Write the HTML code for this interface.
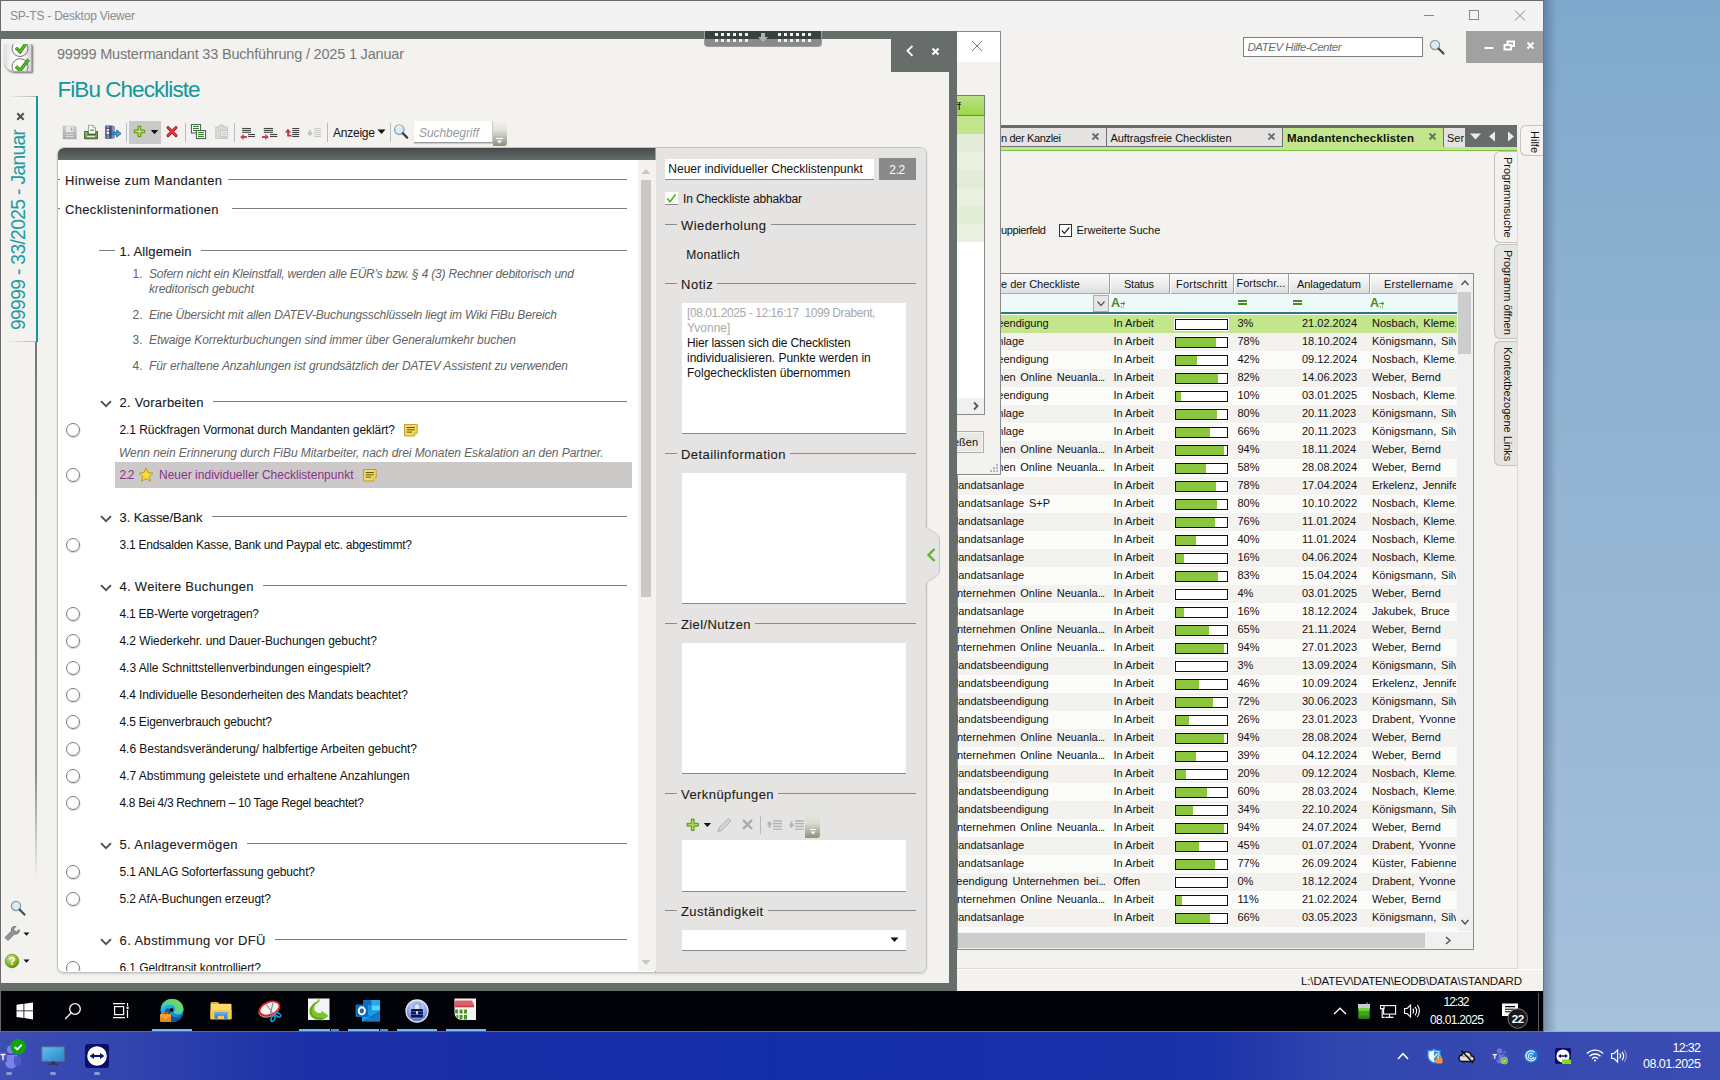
<!DOCTYPE html><html lang="de"><head><meta charset="utf-8"><title>SP-TS - Desktop Viewer</title>
<style>
html,body{margin:0;padding:0;}
body{width:1720px;height:1080px;overflow:hidden;position:relative;background:#8fb0cf;font-family:"Liberation Sans",sans-serif;font-size:12px;}
div,span.t,svg{position:absolute;box-sizing:border-box;}
span.t{white-space:pre;display:block;}
.clip{overflow:hidden;}
</style></head><body><div style="left:1543px;top:0px;width:177px;height:1031px;background:linear-gradient(180deg,#7fa9cc 0%,#8db1d0 30%,#9ab8d6 70%,#a5c1dc 100%);"></div><div style="left:1543px;top:0px;width:14px;height:1031px;background:linear-gradient(90deg,rgba(60,80,110,.45),rgba(60,80,110,0));"></div><div style="left:0px;top:0px;width:1544px;height:1032px;background:#f3f3f3;border-top:1px solid #6a6a6a;border-left:1px solid #6a6a6a;border-right:1px solid #70757a;"></div><span class="t" style="left:10px;top:9.04px;font-size:12px;line-height:15px;color:#8b8b8b;letter-spacing:-0.230px;">SP-TS - Desktop Viewer</span><svg style="left:1415px;top:1px" width="128" height="30" viewBox="0 0 128 30"><g stroke="#8a8a8a" stroke-width="1" fill="none"><path d="M9 14.5h10"/><rect x="54.5" y="9.5" width="9" height="9"/><path d="M100 9.5l10 10M110 9.5l-10 10"/></g></svg><div style="left:1px;top:31px;width:1542px;height:960px;background:#f3f2ee;"></div><div style="left:1243px;top:37px;width:180px;height:20px;background:#fff;border:1px solid #7f7f7f;"></div><span class="t" style="left:1247.5px;top:40.02px;font-size:11.5px;line-height:14px;color:#6d6d6d;letter-spacing:-0.473px;font-style:italic;">DATEV Hilfe-Center</span><svg style="left:1428px;top:38px" width="18" height="18" viewBox="0 0 18 18"><circle cx="7" cy="7" r="4.6" fill="#d8ecf7" stroke="#8a9aa6" stroke-width="1.3"/><path d="M10.5 10.5l5 5" stroke="#4a4a4a" stroke-width="2.2" stroke-linecap="round"/></svg><div style="left:1466px;top:31px;width:77px;height:32px;background:#a0a1a0;"></div><svg style="left:1466px;top:31px" width="77" height="32" viewBox="0 0 77 32"><g fill="none" stroke="#fff" stroke-width="2"><path d="M18.5 17h9"/><path d="M38.5 14h6.5v4.5h-6.5z"/><path d="M41.5 13v-2.5h6.5v4.5h-2.5"/><path d="M61.5 11.5l6 6M67.5 11.5l-6 6"/></g></svg><div style="left:1000px;top:125px;width:517px;height:3px;background:#676d6b;"></div><div style="left:1464px;top:125px;width:53px;height:22px;background:#676d6b;"></div><div style="left:1000px;top:128px;width:107px;height:19px;background:#e4e3e1;border-right:1px solid #707070;border-bottom:1px solid #707070;"></div><div style="left:1107px;top:128px;width:176px;height:19px;background:#e4e3e1;border-right:1px solid #707070;border-bottom:1px solid #707070;"></div><div style="left:1283px;top:128px;width:161px;height:19px;background:#c3e68d;"></div><div style="left:1443px;top:128px;width:22px;height:19px;background:#e4e3e1;border-left:1px solid #707070;"></div><div style="left:1000px;top:147px;width:517px;height:4px;background:#c3e68d;border-bottom:1px solid #7cc142;"></div><span class="t" style="left:1001px;top:130.79px;font-size:11px;line-height:14px;color:#111;letter-spacing:-0.352px;">n der Kanzlei</span><span class="t" style="left:1110.5px;top:130.79px;font-size:11px;line-height:14px;color:#111;letter-spacing:-0.053px;">Auftragsfreie Checklisten</span><span class="t" style="left:1287px;top:130.52px;font-size:11.5px;line-height:14px;color:#111;letter-spacing:0.192px;font-weight:bold;">Mandantenchecklisten</span><span class="t" style="left:1447px;top:130.79px;font-size:11px;line-height:14px;color:#111;">Ser</span><svg style="left:1085px;top:128px" width="360" height="19" viewBox="0 0 360 19"><g transform="translate(10.5,8.5)"><path d="M-3 -3l6 6M3 -3l-6 6" stroke="#6b6b6b" stroke-width="1.8" fill="none"/></g><g transform="translate(186.5,8.5)"><path d="M-3 -3l6 6M3 -3l-6 6" stroke="#6b6b6b" stroke-width="1.8" fill="none"/></g><g transform="translate(347.5,8.5)"><path d="M-3 -3l6 6M3 -3l-6 6" stroke="#6b6b6b" stroke-width="1.8" fill="none"/></g></svg><svg style="left:1464px;top:128px" width="53" height="19" viewBox="0 0 53 19" fill="#ececec"><path d="M6 5.5h11l-5.5 6z"/><path d="M31 3.5v10l-6-5z"/><path d="M44 3.5v10l6-5z"/></svg><div style="left:1517px;top:151px;width:1px;height:818px;background:#dad9d6;"></div><div style="left:1520px;top:125px;width:23px;height:31px;background:#f5f4f1;border:1px solid #c4c3c0;border-right:none;border-radius:6px 0 0 6px;"></div><span class="t" style="left:1527.5px;top:131px;writing-mode:vertical-rl;font-size:11px;color:#111;white-space:pre;line-height:13px;">Hilfe</span><div style="left:1494px;top:151px;width:23px;height:92px;background:#f3f2ee;border:1px solid #c4c3c0;border-right:none;border-radius:6px 0 0 6px;"></div><div style="left:1494px;top:244px;width:23px;height:95px;background:#e6e5e2;border:1px solid #c4c3c0;border-right:none;border-radius:6px 0 0 6px;"></div><div style="left:1494px;top:341px;width:23px;height:125px;background:#e6e5e2;border:1px solid #c4c3c0;border-right:none;border-radius:6px 0 0 6px;"></div><span class="t" style="left:1501px;top:157px;writing-mode:vertical-rl;font-size:11px;color:#111;white-space:pre;line-height:13px;">Programmsuche</span><span class="t" style="left:1501px;top:250px;writing-mode:vertical-rl;font-size:11px;color:#111;white-space:pre;line-height:13px;">Programm öffnen</span><span class="t" style="left:1501px;top:347px;writing-mode:vertical-rl;font-size:11px;color:#111;white-space:pre;line-height:13px;">Kontextbezogene Links</span><span class="t" style="left:1001px;top:223.19px;font-size:11px;line-height:14px;color:#111;letter-spacing:-0.370px;">uppierfeld</span><div style="left:1059px;top:224px;width:13px;height:13px;background:#fff;border:1px solid #333;"></div><svg style="left:1059px;top:224px" width="13" height="13" viewBox="0 0 13 13"><path d="M2.8 6.5l2.6 2.8l4.8-5.8" fill="none" stroke="#222" stroke-width="1.2"/></svg><span class="t" style="left:1076.5px;top:223.19px;font-size:11px;line-height:14px;color:#111;">Erweiterte Suche</span><div style="left:957px;top:273px;width:517px;height:677px;background:#fbfbfa;border:1px solid #8c8c8c;"></div><div style="left:958px;top:274px;width:499px;height:20px;background:linear-gradient(180deg,#fbfbfb 0%,#f0f0f0 45%,#dedede 100%);border-bottom:1px solid #a9a9a9;"></div><div style="left:1109px;top:274px;width:2px;height:20px;background:#a0a0a0;border-right:1px solid #fff;"></div><div style="left:1169px;top:274px;width:2px;height:20px;background:#a0a0a0;border-right:1px solid #fff;"></div><div style="left:1233px;top:274px;width:2px;height:20px;background:#a0a0a0;border-right:1px solid #fff;"></div><div style="left:1288px;top:274px;width:2px;height:20px;background:#a0a0a0;border-right:1px solid #fff;"></div><div style="left:1369px;top:274px;width:2px;height:20px;background:#a0a0a0;border-right:1px solid #fff;"></div><span class="t" style="left:1001px;top:277.19px;font-size:11px;line-height:14px;color:#111;">e der Checkliste</span><span class="t" style="left:1124px;top:277.19px;font-size:11px;line-height:14px;color:#111;letter-spacing:-0.237px;">Status</span><span class="t" style="left:1176px;top:277.19px;font-size:11px;line-height:14px;color:#111;letter-spacing:0.209px;">Fortschritt</span><span class="t" style="left:1236.5px;top:276.19px;font-size:11px;line-height:14px;color:#111;">Fortschr...</span><span class="t" style="left:1297px;top:277.19px;font-size:11px;line-height:14px;color:#111;letter-spacing:-0.083px;">Anlagedatum</span><span class="t" style="left:1384px;top:277.19px;font-size:11px;line-height:14px;color:#111;letter-spacing:0.095px;">Erstellername</span><div style="left:958px;top:294px;width:499px;height:20px;background:#eef9f9;border-bottom:2px solid #2d7c7c;"></div><div style="left:1093px;top:295px;width:16px;height:17px;background:#e6e6e6;border:1px solid #adadad;"></div><svg style="left:1093px;top:295px" width="16" height="17" viewBox="0 0 16 17"><path d="M4.5 6.5l3.5 4l3.5-4" fill="none" stroke="#555" stroke-width="1.2"/></svg><svg style="left:1111px;top:298px" width="16" height="11" viewBox="0 0 16 11"><text x="0" y="9" font-family="Liberation Sans,sans-serif" font-weight="bold" font-size="12.5" fill="#4b8b1a">A</text><path d="M9.5 5.5h4M12 3.8l1.8 1.7l-1.8 1.7" stroke="#4b8b1a" stroke-width="1" fill="none"/><path d="M10 9h4" stroke="#4b8b1a" stroke-width="1" stroke-dasharray="1 1"/></svg><svg style="left:1370px;top:298px" width="16" height="11" viewBox="0 0 16 11"><text x="0" y="9" font-family="Liberation Sans,sans-serif" font-weight="bold" font-size="12.5" fill="#4b8b1a">A</text><path d="M9.5 5.5h4M12 3.8l1.8 1.7l-1.8 1.7" stroke="#4b8b1a" stroke-width="1" fill="none"/><path d="M10 9h4" stroke="#4b8b1a" stroke-width="1" stroke-dasharray="1 1"/></svg><svg style="left:1238px;top:300px" width="10" height="6" viewBox="0 0 10 6"><path d="M0 1h9M0 4h9" stroke="#4b8b1a" stroke-width="1.8"/></svg><svg style="left:1293px;top:300px" width="10" height="6" viewBox="0 0 10 6"><path d="M0 1h9M0 4h9" stroke="#4b8b1a" stroke-width="1.8"/></svg><div style="left:958px;top:315px;width:499px;height:18px;background:#c3e68d;"></div><span class="t" style="left:949px;top:316.19px;font-size:11px;line-height:14px;color:#111;word-spacing:1.6px;">Mandatsbeendigung</span><span class="t" style="left:1113.5px;top:316.19px;font-size:11px;line-height:14px;color:#111;">In Arbeit</span><div style="left:1175px;top:319px;width:53px;height:11px;background:#fff;border:1px solid #111;box-shadow:0 0 0 1px #fff;"></div><span class="t" style="left:1237.5px;top:316.19px;font-size:11px;line-height:14px;color:#111;">3%</span><span class="t" style="left:1302px;top:316.19px;font-size:11px;line-height:14px;color:#111;">21.02.2024</span><div class="clip" style="left:1370px;top:315px;width:86px;height:18px;"><span class="t" style="left:2px;top:1.19px;font-size:11px;line-height:14px;color:#111;word-spacing:1.8px;">Nosbach, Kleme...</span></div><div style="left:958px;top:333px;width:499px;height:18px;background:#f3f2ef;"></div><span class="t" style="left:949px;top:334.19px;font-size:11px;line-height:14px;color:#111;word-spacing:1.6px;">Mandatsanlage</span><span class="t" style="left:1113.5px;top:334.19px;font-size:11px;line-height:14px;color:#111;">In Arbeit</span><div style="left:1175px;top:337px;width:53px;height:11px;background:#fff;border:1px solid #111;box-shadow:0 0 0 1px #fff;"></div><div style="left:1176px;top:338px;width:40px;height:9px;background:#8cc63f;"></div><span class="t" style="left:1237.5px;top:334.19px;font-size:11px;line-height:14px;color:#111;">78%</span><span class="t" style="left:1302px;top:334.19px;font-size:11px;line-height:14px;color:#111;">18.10.2024</span><div class="clip" style="left:1370px;top:333px;width:86px;height:18px;"><span class="t" style="left:2px;top:1.19px;font-size:11px;line-height:14px;color:#111;word-spacing:1.8px;">Königsmann, Silv...</span></div><div style="left:958px;top:351px;width:499px;height:18px;background:#fbfbfa;"></div><span class="t" style="left:949px;top:352.19px;font-size:11px;line-height:14px;color:#111;word-spacing:1.6px;">Mandatsbeendigung</span><span class="t" style="left:1113.5px;top:352.19px;font-size:11px;line-height:14px;color:#111;">In Arbeit</span><div style="left:1175px;top:355px;width:53px;height:11px;background:#fff;border:1px solid #111;box-shadow:0 0 0 1px #fff;"></div><div style="left:1176px;top:356px;width:21px;height:9px;background:#8cc63f;"></div><span class="t" style="left:1237.5px;top:352.19px;font-size:11px;line-height:14px;color:#111;">42%</span><span class="t" style="left:1302px;top:352.19px;font-size:11px;line-height:14px;color:#111;">09.12.2024</span><div class="clip" style="left:1370px;top:351px;width:86px;height:18px;"><span class="t" style="left:2px;top:1.19px;font-size:11px;line-height:14px;color:#111;word-spacing:1.8px;">Nosbach, Kleme...</span></div><div style="left:958px;top:369px;width:499px;height:18px;background:#f3f2ef;"></div><span class="t" style="left:949px;top:370.19px;font-size:11px;line-height:14px;color:#111;word-spacing:1.6px;">Unternehmen Online Neuanla<span style="letter-spacing:-0.9px">...</span></span><span class="t" style="left:1113.5px;top:370.19px;font-size:11px;line-height:14px;color:#111;">In Arbeit</span><div style="left:1175px;top:373px;width:53px;height:11px;background:#fff;border:1px solid #111;box-shadow:0 0 0 1px #fff;"></div><div style="left:1176px;top:374px;width:42px;height:9px;background:#8cc63f;"></div><span class="t" style="left:1237.5px;top:370.19px;font-size:11px;line-height:14px;color:#111;">82%</span><span class="t" style="left:1302px;top:370.19px;font-size:11px;line-height:14px;color:#111;">14.06.2023</span><div class="clip" style="left:1370px;top:369px;width:86px;height:18px;"><span class="t" style="left:2px;top:1.19px;font-size:11px;line-height:14px;color:#111;word-spacing:1.8px;">Weber, Bernd</span></div><div style="left:958px;top:387px;width:499px;height:18px;background:#fbfbfa;"></div><span class="t" style="left:949px;top:388.19px;font-size:11px;line-height:14px;color:#111;word-spacing:1.6px;">Mandatsbeendigung</span><span class="t" style="left:1113.5px;top:388.19px;font-size:11px;line-height:14px;color:#111;">In Arbeit</span><div style="left:1175px;top:391px;width:53px;height:11px;background:#fff;border:1px solid #111;box-shadow:0 0 0 1px #fff;"></div><div style="left:1176px;top:392px;width:5px;height:9px;background:#8cc63f;"></div><span class="t" style="left:1237.5px;top:388.19px;font-size:11px;line-height:14px;color:#111;">10%</span><span class="t" style="left:1302px;top:388.19px;font-size:11px;line-height:14px;color:#111;">03.01.2025</span><div class="clip" style="left:1370px;top:387px;width:86px;height:18px;"><span class="t" style="left:2px;top:1.19px;font-size:11px;line-height:14px;color:#111;word-spacing:1.8px;">Nosbach, Kleme...</span></div><div style="left:958px;top:405px;width:499px;height:18px;background:#f3f2ef;"></div><span class="t" style="left:949px;top:406.19px;font-size:11px;line-height:14px;color:#111;word-spacing:1.6px;">Mandatsanlage</span><span class="t" style="left:1113.5px;top:406.19px;font-size:11px;line-height:14px;color:#111;">In Arbeit</span><div style="left:1175px;top:409px;width:53px;height:11px;background:#fff;border:1px solid #111;box-shadow:0 0 0 1px #fff;"></div><div style="left:1176px;top:410px;width:41px;height:9px;background:#8cc63f;"></div><span class="t" style="left:1237.5px;top:406.19px;font-size:11px;line-height:14px;color:#111;">80%</span><span class="t" style="left:1302px;top:406.19px;font-size:11px;line-height:14px;color:#111;">20.11.2023</span><div class="clip" style="left:1370px;top:405px;width:86px;height:18px;"><span class="t" style="left:2px;top:1.19px;font-size:11px;line-height:14px;color:#111;word-spacing:1.8px;">Königsmann, Silv...</span></div><div style="left:958px;top:423px;width:499px;height:18px;background:#fbfbfa;"></div><span class="t" style="left:949px;top:424.19px;font-size:11px;line-height:14px;color:#111;word-spacing:1.6px;">Mandatsanlage</span><span class="t" style="left:1113.5px;top:424.19px;font-size:11px;line-height:14px;color:#111;">In Arbeit</span><div style="left:1175px;top:427px;width:53px;height:11px;background:#fff;border:1px solid #111;box-shadow:0 0 0 1px #fff;"></div><div style="left:1176px;top:428px;width:34px;height:9px;background:#8cc63f;"></div><span class="t" style="left:1237.5px;top:424.19px;font-size:11px;line-height:14px;color:#111;">66%</span><span class="t" style="left:1302px;top:424.19px;font-size:11px;line-height:14px;color:#111;">20.11.2023</span><div class="clip" style="left:1370px;top:423px;width:86px;height:18px;"><span class="t" style="left:2px;top:1.19px;font-size:11px;line-height:14px;color:#111;word-spacing:1.8px;">Königsmann, Silv...</span></div><div style="left:958px;top:441px;width:499px;height:18px;background:#f3f2ef;"></div><span class="t" style="left:949px;top:442.19px;font-size:11px;line-height:14px;color:#111;word-spacing:1.6px;">Unternehmen Online Neuanla<span style="letter-spacing:-0.9px">...</span></span><span class="t" style="left:1113.5px;top:442.19px;font-size:11px;line-height:14px;color:#111;">In Arbeit</span><div style="left:1175px;top:445px;width:53px;height:11px;background:#fff;border:1px solid #111;box-shadow:0 0 0 1px #fff;"></div><div style="left:1176px;top:446px;width:48px;height:9px;background:#8cc63f;"></div><span class="t" style="left:1237.5px;top:442.19px;font-size:11px;line-height:14px;color:#111;">94%</span><span class="t" style="left:1302px;top:442.19px;font-size:11px;line-height:14px;color:#111;">18.11.2024</span><div class="clip" style="left:1370px;top:441px;width:86px;height:18px;"><span class="t" style="left:2px;top:1.19px;font-size:11px;line-height:14px;color:#111;word-spacing:1.8px;">Weber, Bernd</span></div><div style="left:958px;top:459px;width:499px;height:18px;background:#fbfbfa;"></div><span class="t" style="left:949px;top:460.19px;font-size:11px;line-height:14px;color:#111;word-spacing:1.6px;">Unternehmen Online Neuanla<span style="letter-spacing:-0.9px">...</span></span><span class="t" style="left:1113.5px;top:460.19px;font-size:11px;line-height:14px;color:#111;">In Arbeit</span><div style="left:1175px;top:463px;width:53px;height:11px;background:#fff;border:1px solid #111;box-shadow:0 0 0 1px #fff;"></div><div style="left:1176px;top:464px;width:30px;height:9px;background:#8cc63f;"></div><span class="t" style="left:1237.5px;top:460.19px;font-size:11px;line-height:14px;color:#111;">58%</span><span class="t" style="left:1302px;top:460.19px;font-size:11px;line-height:14px;color:#111;">28.08.2024</span><div class="clip" style="left:1370px;top:459px;width:86px;height:18px;"><span class="t" style="left:2px;top:1.19px;font-size:11px;line-height:14px;color:#111;word-spacing:1.8px;">Weber, Bernd</span></div><div style="left:958px;top:477px;width:499px;height:18px;background:#f3f2ef;"></div><span class="t" style="left:949px;top:478.19px;font-size:11px;line-height:14px;color:#111;word-spacing:1.6px;">Mandatsanlage</span><span class="t" style="left:1113.5px;top:478.19px;font-size:11px;line-height:14px;color:#111;">In Arbeit</span><div style="left:1175px;top:481px;width:53px;height:11px;background:#fff;border:1px solid #111;box-shadow:0 0 0 1px #fff;"></div><div style="left:1176px;top:482px;width:40px;height:9px;background:#8cc63f;"></div><span class="t" style="left:1237.5px;top:478.19px;font-size:11px;line-height:14px;color:#111;">78%</span><span class="t" style="left:1302px;top:478.19px;font-size:11px;line-height:14px;color:#111;">17.04.2024</span><div class="clip" style="left:1370px;top:477px;width:86px;height:18px;"><span class="t" style="left:2px;top:1.19px;font-size:11px;line-height:14px;color:#111;word-spacing:1.8px;">Erkelenz, Jennifer</span></div><div style="left:958px;top:495px;width:499px;height:18px;background:#fbfbfa;"></div><span class="t" style="left:949px;top:496.19px;font-size:11px;line-height:14px;color:#111;word-spacing:1.6px;">Mandatsanlage S+P</span><span class="t" style="left:1113.5px;top:496.19px;font-size:11px;line-height:14px;color:#111;">In Arbeit</span><div style="left:1175px;top:499px;width:53px;height:11px;background:#fff;border:1px solid #111;box-shadow:0 0 0 1px #fff;"></div><div style="left:1176px;top:500px;width:41px;height:9px;background:#8cc63f;"></div><span class="t" style="left:1237.5px;top:496.19px;font-size:11px;line-height:14px;color:#111;">80%</span><span class="t" style="left:1302px;top:496.19px;font-size:11px;line-height:14px;color:#111;">10.10.2022</span><div class="clip" style="left:1370px;top:495px;width:86px;height:18px;"><span class="t" style="left:2px;top:1.19px;font-size:11px;line-height:14px;color:#111;word-spacing:1.8px;">Nosbach, Kleme...</span></div><div style="left:958px;top:513px;width:499px;height:18px;background:#f3f2ef;"></div><span class="t" style="left:949px;top:514.19px;font-size:11px;line-height:14px;color:#111;word-spacing:1.6px;">Mandatsanlage</span><span class="t" style="left:1113.5px;top:514.19px;font-size:11px;line-height:14px;color:#111;">In Arbeit</span><div style="left:1175px;top:517px;width:53px;height:11px;background:#fff;border:1px solid #111;box-shadow:0 0 0 1px #fff;"></div><div style="left:1176px;top:518px;width:39px;height:9px;background:#8cc63f;"></div><span class="t" style="left:1237.5px;top:514.19px;font-size:11px;line-height:14px;color:#111;">76%</span><span class="t" style="left:1302px;top:514.19px;font-size:11px;line-height:14px;color:#111;">11.01.2024</span><div class="clip" style="left:1370px;top:513px;width:86px;height:18px;"><span class="t" style="left:2px;top:1.19px;font-size:11px;line-height:14px;color:#111;word-spacing:1.8px;">Nosbach, Kleme...</span></div><div style="left:958px;top:531px;width:499px;height:18px;background:#fbfbfa;"></div><span class="t" style="left:949px;top:532.19px;font-size:11px;line-height:14px;color:#111;word-spacing:1.6px;">Mandatsanlage</span><span class="t" style="left:1113.5px;top:532.19px;font-size:11px;line-height:14px;color:#111;">In Arbeit</span><div style="left:1175px;top:535px;width:53px;height:11px;background:#fff;border:1px solid #111;box-shadow:0 0 0 1px #fff;"></div><div style="left:1176px;top:536px;width:20px;height:9px;background:#8cc63f;"></div><span class="t" style="left:1237.5px;top:532.19px;font-size:11px;line-height:14px;color:#111;">40%</span><span class="t" style="left:1302px;top:532.19px;font-size:11px;line-height:14px;color:#111;">11.01.2024</span><div class="clip" style="left:1370px;top:531px;width:86px;height:18px;"><span class="t" style="left:2px;top:1.19px;font-size:11px;line-height:14px;color:#111;word-spacing:1.8px;">Nosbach, Kleme...</span></div><div style="left:958px;top:549px;width:499px;height:18px;background:#f3f2ef;"></div><span class="t" style="left:949px;top:550.19px;font-size:11px;line-height:14px;color:#111;word-spacing:1.6px;">Mandatsanlage</span><span class="t" style="left:1113.5px;top:550.19px;font-size:11px;line-height:14px;color:#111;">In Arbeit</span><div style="left:1175px;top:553px;width:53px;height:11px;background:#fff;border:1px solid #111;box-shadow:0 0 0 1px #fff;"></div><div style="left:1176px;top:554px;width:8px;height:9px;background:#8cc63f;"></div><span class="t" style="left:1237.5px;top:550.19px;font-size:11px;line-height:14px;color:#111;">16%</span><span class="t" style="left:1302px;top:550.19px;font-size:11px;line-height:14px;color:#111;">04.06.2024</span><div class="clip" style="left:1370px;top:549px;width:86px;height:18px;"><span class="t" style="left:2px;top:1.19px;font-size:11px;line-height:14px;color:#111;word-spacing:1.8px;">Nosbach, Kleme...</span></div><div style="left:958px;top:567px;width:499px;height:18px;background:#fbfbfa;"></div><span class="t" style="left:949px;top:568.19px;font-size:11px;line-height:14px;color:#111;word-spacing:1.6px;">Mandatsanlage</span><span class="t" style="left:1113.5px;top:568.19px;font-size:11px;line-height:14px;color:#111;">In Arbeit</span><div style="left:1175px;top:571px;width:53px;height:11px;background:#fff;border:1px solid #111;box-shadow:0 0 0 1px #fff;"></div><div style="left:1176px;top:572px;width:42px;height:9px;background:#8cc63f;"></div><span class="t" style="left:1237.5px;top:568.19px;font-size:11px;line-height:14px;color:#111;">83%</span><span class="t" style="left:1302px;top:568.19px;font-size:11px;line-height:14px;color:#111;">15.04.2024</span><div class="clip" style="left:1370px;top:567px;width:86px;height:18px;"><span class="t" style="left:2px;top:1.19px;font-size:11px;line-height:14px;color:#111;word-spacing:1.8px;">Königsmann, Silv...</span></div><div style="left:958px;top:585px;width:499px;height:18px;background:#f3f2ef;"></div><span class="t" style="left:949px;top:586.19px;font-size:11px;line-height:14px;color:#111;word-spacing:1.6px;">Unternehmen Online Neuanla<span style="letter-spacing:-0.9px">...</span></span><span class="t" style="left:1113.5px;top:586.19px;font-size:11px;line-height:14px;color:#111;">In Arbeit</span><div style="left:1175px;top:589px;width:53px;height:11px;background:#fff;border:1px solid #111;box-shadow:0 0 0 1px #fff;"></div><span class="t" style="left:1237.5px;top:586.19px;font-size:11px;line-height:14px;color:#111;">4%</span><span class="t" style="left:1302px;top:586.19px;font-size:11px;line-height:14px;color:#111;">03.01.2025</span><div class="clip" style="left:1370px;top:585px;width:86px;height:18px;"><span class="t" style="left:2px;top:1.19px;font-size:11px;line-height:14px;color:#111;word-spacing:1.8px;">Weber, Bernd</span></div><div style="left:958px;top:603px;width:499px;height:18px;background:#fbfbfa;"></div><span class="t" style="left:949px;top:604.19px;font-size:11px;line-height:14px;color:#111;word-spacing:1.6px;">Mandatsanlage</span><span class="t" style="left:1113.5px;top:604.19px;font-size:11px;line-height:14px;color:#111;">In Arbeit</span><div style="left:1175px;top:607px;width:53px;height:11px;background:#fff;border:1px solid #111;box-shadow:0 0 0 1px #fff;"></div><div style="left:1176px;top:608px;width:8px;height:9px;background:#8cc63f;"></div><span class="t" style="left:1237.5px;top:604.19px;font-size:11px;line-height:14px;color:#111;">16%</span><span class="t" style="left:1302px;top:604.19px;font-size:11px;line-height:14px;color:#111;">18.12.2024</span><div class="clip" style="left:1370px;top:603px;width:86px;height:18px;"><span class="t" style="left:2px;top:1.19px;font-size:11px;line-height:14px;color:#111;word-spacing:1.8px;">Jakubek, Bruce</span></div><div style="left:958px;top:621px;width:499px;height:18px;background:#f3f2ef;"></div><span class="t" style="left:949px;top:622.19px;font-size:11px;line-height:14px;color:#111;word-spacing:1.6px;">Unternehmen Online Neuanla<span style="letter-spacing:-0.9px">...</span></span><span class="t" style="left:1113.5px;top:622.19px;font-size:11px;line-height:14px;color:#111;">In Arbeit</span><div style="left:1175px;top:625px;width:53px;height:11px;background:#fff;border:1px solid #111;box-shadow:0 0 0 1px #fff;"></div><div style="left:1176px;top:626px;width:33px;height:9px;background:#8cc63f;"></div><span class="t" style="left:1237.5px;top:622.19px;font-size:11px;line-height:14px;color:#111;">65%</span><span class="t" style="left:1302px;top:622.19px;font-size:11px;line-height:14px;color:#111;">21.11.2024</span><div class="clip" style="left:1370px;top:621px;width:86px;height:18px;"><span class="t" style="left:2px;top:1.19px;font-size:11px;line-height:14px;color:#111;word-spacing:1.8px;">Weber, Bernd</span></div><div style="left:958px;top:639px;width:499px;height:18px;background:#fbfbfa;"></div><span class="t" style="left:949px;top:640.19px;font-size:11px;line-height:14px;color:#111;word-spacing:1.6px;">Unternehmen Online Neuanla<span style="letter-spacing:-0.9px">...</span></span><span class="t" style="left:1113.5px;top:640.19px;font-size:11px;line-height:14px;color:#111;">In Arbeit</span><div style="left:1175px;top:643px;width:53px;height:11px;background:#fff;border:1px solid #111;box-shadow:0 0 0 1px #fff;"></div><div style="left:1176px;top:644px;width:48px;height:9px;background:#8cc63f;"></div><span class="t" style="left:1237.5px;top:640.19px;font-size:11px;line-height:14px;color:#111;">94%</span><span class="t" style="left:1302px;top:640.19px;font-size:11px;line-height:14px;color:#111;">27.01.2023</span><div class="clip" style="left:1370px;top:639px;width:86px;height:18px;"><span class="t" style="left:2px;top:1.19px;font-size:11px;line-height:14px;color:#111;word-spacing:1.8px;">Weber, Bernd</span></div><div style="left:958px;top:657px;width:499px;height:18px;background:#f3f2ef;"></div><span class="t" style="left:949px;top:658.19px;font-size:11px;line-height:14px;color:#111;word-spacing:1.6px;">Mandatsbeendigung</span><span class="t" style="left:1113.5px;top:658.19px;font-size:11px;line-height:14px;color:#111;">In Arbeit</span><div style="left:1175px;top:661px;width:53px;height:11px;background:#fff;border:1px solid #111;box-shadow:0 0 0 1px #fff;"></div><span class="t" style="left:1237.5px;top:658.19px;font-size:11px;line-height:14px;color:#111;">3%</span><span class="t" style="left:1302px;top:658.19px;font-size:11px;line-height:14px;color:#111;">13.09.2024</span><div class="clip" style="left:1370px;top:657px;width:86px;height:18px;"><span class="t" style="left:2px;top:1.19px;font-size:11px;line-height:14px;color:#111;word-spacing:1.8px;">Königsmann, Silv...</span></div><div style="left:958px;top:675px;width:499px;height:18px;background:#fbfbfa;"></div><span class="t" style="left:949px;top:676.19px;font-size:11px;line-height:14px;color:#111;word-spacing:1.6px;">Mandatsbeendigung</span><span class="t" style="left:1113.5px;top:676.19px;font-size:11px;line-height:14px;color:#111;">In Arbeit</span><div style="left:1175px;top:679px;width:53px;height:11px;background:#fff;border:1px solid #111;box-shadow:0 0 0 1px #fff;"></div><div style="left:1176px;top:680px;width:23px;height:9px;background:#8cc63f;"></div><span class="t" style="left:1237.5px;top:676.19px;font-size:11px;line-height:14px;color:#111;">46%</span><span class="t" style="left:1302px;top:676.19px;font-size:11px;line-height:14px;color:#111;">10.09.2024</span><div class="clip" style="left:1370px;top:675px;width:86px;height:18px;"><span class="t" style="left:2px;top:1.19px;font-size:11px;line-height:14px;color:#111;word-spacing:1.8px;">Erkelenz, Jennifer</span></div><div style="left:958px;top:693px;width:499px;height:18px;background:#f3f2ef;"></div><span class="t" style="left:949px;top:694.19px;font-size:11px;line-height:14px;color:#111;word-spacing:1.6px;">Mandatsbeendigung</span><span class="t" style="left:1113.5px;top:694.19px;font-size:11px;line-height:14px;color:#111;">In Arbeit</span><div style="left:1175px;top:697px;width:53px;height:11px;background:#fff;border:1px solid #111;box-shadow:0 0 0 1px #fff;"></div><div style="left:1176px;top:698px;width:37px;height:9px;background:#8cc63f;"></div><span class="t" style="left:1237.5px;top:694.19px;font-size:11px;line-height:14px;color:#111;">72%</span><span class="t" style="left:1302px;top:694.19px;font-size:11px;line-height:14px;color:#111;">30.06.2023</span><div class="clip" style="left:1370px;top:693px;width:86px;height:18px;"><span class="t" style="left:2px;top:1.19px;font-size:11px;line-height:14px;color:#111;word-spacing:1.8px;">Königsmann, Silv...</span></div><div style="left:958px;top:711px;width:499px;height:18px;background:#fbfbfa;"></div><span class="t" style="left:949px;top:712.19px;font-size:11px;line-height:14px;color:#111;word-spacing:1.6px;">Mandatsbeendigung</span><span class="t" style="left:1113.5px;top:712.19px;font-size:11px;line-height:14px;color:#111;">In Arbeit</span><div style="left:1175px;top:715px;width:53px;height:11px;background:#fff;border:1px solid #111;box-shadow:0 0 0 1px #fff;"></div><div style="left:1176px;top:716px;width:13px;height:9px;background:#8cc63f;"></div><span class="t" style="left:1237.5px;top:712.19px;font-size:11px;line-height:14px;color:#111;">26%</span><span class="t" style="left:1302px;top:712.19px;font-size:11px;line-height:14px;color:#111;">23.01.2023</span><div class="clip" style="left:1370px;top:711px;width:86px;height:18px;"><span class="t" style="left:2px;top:1.19px;font-size:11px;line-height:14px;color:#111;word-spacing:1.8px;">Drabent, Yvonne</span></div><div style="left:958px;top:729px;width:499px;height:18px;background:#f3f2ef;"></div><span class="t" style="left:949px;top:730.19px;font-size:11px;line-height:14px;color:#111;word-spacing:1.6px;">Unternehmen Online Neuanla<span style="letter-spacing:-0.9px">...</span></span><span class="t" style="left:1113.5px;top:730.19px;font-size:11px;line-height:14px;color:#111;">In Arbeit</span><div style="left:1175px;top:733px;width:53px;height:11px;background:#fff;border:1px solid #111;box-shadow:0 0 0 1px #fff;"></div><div style="left:1176px;top:734px;width:48px;height:9px;background:#8cc63f;"></div><span class="t" style="left:1237.5px;top:730.19px;font-size:11px;line-height:14px;color:#111;">94%</span><span class="t" style="left:1302px;top:730.19px;font-size:11px;line-height:14px;color:#111;">28.08.2024</span><div class="clip" style="left:1370px;top:729px;width:86px;height:18px;"><span class="t" style="left:2px;top:1.19px;font-size:11px;line-height:14px;color:#111;word-spacing:1.8px;">Weber, Bernd</span></div><div style="left:958px;top:747px;width:499px;height:18px;background:#fbfbfa;"></div><span class="t" style="left:949px;top:748.19px;font-size:11px;line-height:14px;color:#111;word-spacing:1.6px;">Unternehmen Online Neuanla<span style="letter-spacing:-0.9px">...</span></span><span class="t" style="left:1113.5px;top:748.19px;font-size:11px;line-height:14px;color:#111;">In Arbeit</span><div style="left:1175px;top:751px;width:53px;height:11px;background:#fff;border:1px solid #111;box-shadow:0 0 0 1px #fff;"></div><div style="left:1176px;top:752px;width:20px;height:9px;background:#8cc63f;"></div><span class="t" style="left:1237.5px;top:748.19px;font-size:11px;line-height:14px;color:#111;">39%</span><span class="t" style="left:1302px;top:748.19px;font-size:11px;line-height:14px;color:#111;">04.12.2024</span><div class="clip" style="left:1370px;top:747px;width:86px;height:18px;"><span class="t" style="left:2px;top:1.19px;font-size:11px;line-height:14px;color:#111;word-spacing:1.8px;">Weber, Bernd</span></div><div style="left:958px;top:765px;width:499px;height:18px;background:#f3f2ef;"></div><span class="t" style="left:949px;top:766.19px;font-size:11px;line-height:14px;color:#111;word-spacing:1.6px;">Mandatsbeendigung</span><span class="t" style="left:1113.5px;top:766.19px;font-size:11px;line-height:14px;color:#111;">In Arbeit</span><div style="left:1175px;top:769px;width:53px;height:11px;background:#fff;border:1px solid #111;box-shadow:0 0 0 1px #fff;"></div><div style="left:1176px;top:770px;width:10px;height:9px;background:#8cc63f;"></div><span class="t" style="left:1237.5px;top:766.19px;font-size:11px;line-height:14px;color:#111;">20%</span><span class="t" style="left:1302px;top:766.19px;font-size:11px;line-height:14px;color:#111;">09.12.2024</span><div class="clip" style="left:1370px;top:765px;width:86px;height:18px;"><span class="t" style="left:2px;top:1.19px;font-size:11px;line-height:14px;color:#111;word-spacing:1.8px;">Nosbach, Kleme...</span></div><div style="left:958px;top:783px;width:499px;height:18px;background:#fbfbfa;"></div><span class="t" style="left:949px;top:784.19px;font-size:11px;line-height:14px;color:#111;word-spacing:1.6px;">Mandatsbeendigung</span><span class="t" style="left:1113.5px;top:784.19px;font-size:11px;line-height:14px;color:#111;">In Arbeit</span><div style="left:1175px;top:787px;width:53px;height:11px;background:#fff;border:1px solid #111;box-shadow:0 0 0 1px #fff;"></div><div style="left:1176px;top:788px;width:31px;height:9px;background:#8cc63f;"></div><span class="t" style="left:1237.5px;top:784.19px;font-size:11px;line-height:14px;color:#111;">60%</span><span class="t" style="left:1302px;top:784.19px;font-size:11px;line-height:14px;color:#111;">28.03.2024</span><div class="clip" style="left:1370px;top:783px;width:86px;height:18px;"><span class="t" style="left:2px;top:1.19px;font-size:11px;line-height:14px;color:#111;word-spacing:1.8px;">Nosbach, Kleme...</span></div><div style="left:958px;top:801px;width:499px;height:18px;background:#f3f2ef;"></div><span class="t" style="left:949px;top:802.19px;font-size:11px;line-height:14px;color:#111;word-spacing:1.6px;">Mandatsbeendigung</span><span class="t" style="left:1113.5px;top:802.19px;font-size:11px;line-height:14px;color:#111;">In Arbeit</span><div style="left:1175px;top:805px;width:53px;height:11px;background:#fff;border:1px solid #111;box-shadow:0 0 0 1px #fff;"></div><div style="left:1176px;top:806px;width:17px;height:9px;background:#8cc63f;"></div><span class="t" style="left:1237.5px;top:802.19px;font-size:11px;line-height:14px;color:#111;">34%</span><span class="t" style="left:1302px;top:802.19px;font-size:11px;line-height:14px;color:#111;">22.10.2024</span><div class="clip" style="left:1370px;top:801px;width:86px;height:18px;"><span class="t" style="left:2px;top:1.19px;font-size:11px;line-height:14px;color:#111;word-spacing:1.8px;">Königsmann, Silv...</span></div><div style="left:958px;top:819px;width:499px;height:18px;background:#fbfbfa;"></div><span class="t" style="left:949px;top:820.19px;font-size:11px;line-height:14px;color:#111;word-spacing:1.6px;">Unternehmen Online Neuanla<span style="letter-spacing:-0.9px">...</span></span><span class="t" style="left:1113.5px;top:820.19px;font-size:11px;line-height:14px;color:#111;">In Arbeit</span><div style="left:1175px;top:823px;width:53px;height:11px;background:#fff;border:1px solid #111;box-shadow:0 0 0 1px #fff;"></div><div style="left:1176px;top:824px;width:48px;height:9px;background:#8cc63f;"></div><span class="t" style="left:1237.5px;top:820.19px;font-size:11px;line-height:14px;color:#111;">94%</span><span class="t" style="left:1302px;top:820.19px;font-size:11px;line-height:14px;color:#111;">24.07.2024</span><div class="clip" style="left:1370px;top:819px;width:86px;height:18px;"><span class="t" style="left:2px;top:1.19px;font-size:11px;line-height:14px;color:#111;word-spacing:1.8px;">Weber, Bernd</span></div><div style="left:958px;top:837px;width:499px;height:18px;background:#f3f2ef;"></div><span class="t" style="left:949px;top:838.19px;font-size:11px;line-height:14px;color:#111;word-spacing:1.6px;">Mandatsanlage</span><span class="t" style="left:1113.5px;top:838.19px;font-size:11px;line-height:14px;color:#111;">In Arbeit</span><div style="left:1175px;top:841px;width:53px;height:11px;background:#fff;border:1px solid #111;box-shadow:0 0 0 1px #fff;"></div><div style="left:1176px;top:842px;width:23px;height:9px;background:#8cc63f;"></div><span class="t" style="left:1237.5px;top:838.19px;font-size:11px;line-height:14px;color:#111;">45%</span><span class="t" style="left:1302px;top:838.19px;font-size:11px;line-height:14px;color:#111;">01.07.2024</span><div class="clip" style="left:1370px;top:837px;width:86px;height:18px;"><span class="t" style="left:2px;top:1.19px;font-size:11px;line-height:14px;color:#111;word-spacing:1.8px;">Drabent, Yvonne</span></div><div style="left:958px;top:855px;width:499px;height:18px;background:#fbfbfa;"></div><span class="t" style="left:949px;top:856.19px;font-size:11px;line-height:14px;color:#111;word-spacing:1.6px;">Mandatsanlage</span><span class="t" style="left:1113.5px;top:856.19px;font-size:11px;line-height:14px;color:#111;">In Arbeit</span><div style="left:1175px;top:859px;width:53px;height:11px;background:#fff;border:1px solid #111;box-shadow:0 0 0 1px #fff;"></div><div style="left:1176px;top:860px;width:39px;height:9px;background:#8cc63f;"></div><span class="t" style="left:1237.5px;top:856.19px;font-size:11px;line-height:14px;color:#111;">77%</span><span class="t" style="left:1302px;top:856.19px;font-size:11px;line-height:14px;color:#111;">26.09.2024</span><div class="clip" style="left:1370px;top:855px;width:86px;height:18px;"><span class="t" style="left:2px;top:1.19px;font-size:11px;line-height:14px;color:#111;word-spacing:1.8px;">Küster, Fabienne</span></div><div style="left:958px;top:873px;width:499px;height:18px;background:#f3f2ef;"></div><span class="t" style="left:949px;top:874.19px;font-size:11px;line-height:14px;color:#111;word-spacing:1.6px;">Beendigung Unternehmen bei<span style="letter-spacing:-0.9px">...</span></span><span class="t" style="left:1113.5px;top:874.19px;font-size:11px;line-height:14px;color:#111;">Offen</span><div style="left:1175px;top:877px;width:53px;height:11px;background:#fff;border:1px solid #111;box-shadow:0 0 0 1px #fff;"></div><span class="t" style="left:1237.5px;top:874.19px;font-size:11px;line-height:14px;color:#111;">0%</span><span class="t" style="left:1302px;top:874.19px;font-size:11px;line-height:14px;color:#111;">18.12.2024</span><div class="clip" style="left:1370px;top:873px;width:86px;height:18px;"><span class="t" style="left:2px;top:1.19px;font-size:11px;line-height:14px;color:#111;word-spacing:1.8px;">Drabent, Yvonne</span></div><div style="left:958px;top:891px;width:499px;height:18px;background:#fbfbfa;"></div><span class="t" style="left:949px;top:892.19px;font-size:11px;line-height:14px;color:#111;word-spacing:1.6px;">Unternehmen Online Neuanla<span style="letter-spacing:-0.9px">...</span></span><span class="t" style="left:1113.5px;top:892.19px;font-size:11px;line-height:14px;color:#111;">In Arbeit</span><div style="left:1175px;top:895px;width:53px;height:11px;background:#fff;border:1px solid #111;box-shadow:0 0 0 1px #fff;"></div><div style="left:1176px;top:896px;width:6px;height:9px;background:#8cc63f;"></div><span class="t" style="left:1237.5px;top:892.19px;font-size:11px;line-height:14px;color:#111;">11%</span><span class="t" style="left:1302px;top:892.19px;font-size:11px;line-height:14px;color:#111;">21.02.2024</span><div class="clip" style="left:1370px;top:891px;width:86px;height:18px;"><span class="t" style="left:2px;top:1.19px;font-size:11px;line-height:14px;color:#111;word-spacing:1.8px;">Weber, Bernd</span></div><div style="left:958px;top:909px;width:499px;height:18px;background:#f3f2ef;"></div><span class="t" style="left:949px;top:910.19px;font-size:11px;line-height:14px;color:#111;word-spacing:1.6px;">Mandatsanlage</span><span class="t" style="left:1113.5px;top:910.19px;font-size:11px;line-height:14px;color:#111;">In Arbeit</span><div style="left:1175px;top:913px;width:53px;height:11px;background:#fff;border:1px solid #111;box-shadow:0 0 0 1px #fff;"></div><div style="left:1176px;top:914px;width:34px;height:9px;background:#8cc63f;"></div><span class="t" style="left:1237.5px;top:910.19px;font-size:11px;line-height:14px;color:#111;">66%</span><span class="t" style="left:1302px;top:910.19px;font-size:11px;line-height:14px;color:#111;">03.05.2023</span><div class="clip" style="left:1370px;top:909px;width:86px;height:18px;"><span class="t" style="left:2px;top:1.19px;font-size:11px;line-height:14px;color:#111;word-spacing:1.8px;">Königsmann, Silv...</span></div><div style="left:1457px;top:274px;width:16px;height:657px;background:#f0f0f0;"></div><div style="left:1458px;top:292px;width:13px;height:62px;background:#cdcdcd;"></div><svg style="left:1457px;top:274px" width="16" height="657" viewBox="0 0 16 657"><path d="M4.5 11l3.5-4l3.5 4M4.5 646l3.5 4l3.5-4" fill="none" stroke="#505050" stroke-width="1.4"/></svg><div style="left:958px;top:932px;width:515px;height:17px;background:#f0f0f0;"></div><div style="left:958px;top:933px;width:467px;height:15px;background:#cdcdcd;"></div><svg style="left:1440px;top:932px" width="16" height="17" viewBox="0 0 16 17"><path d="M6 5l4 3.5l-4 3.5" fill="none" stroke="#505050" stroke-width="1.4"/></svg><div style="left:957px;top:968px;width:561px;height:1px;background:#dcdbd8;"></div><div style="left:957px;top:969px;width:586px;height:1px;background:#fdfdfc;"></div><span class="t" style="left:1301px;top:974.02px;font-size:11.5px;line-height:14px;color:#111;letter-spacing:-0.129px;">L:\DATEV\DATEN\EODB\DATA\STANDARD</span><div style="left:957px;top:31px;width:44px;height:444px;background:#f3f2ee;border-top:1px solid #8a8a8a;border-right:1px solid #8a8a8a;border-bottom:1px solid #8a8a8a;"></div><div style="left:957px;top:32px;width:43px;height:30px;background:#fff;"></div><svg style="left:970px;top:39px" width="14" height="14" viewBox="0 0 14 14"><path d="M2 2l10 10M12 2l-10 10" stroke="#7a7a7a" stroke-width="1" fill="none"/></svg><div style="left:957px;top:95px;width:28px;height:320px;background:#fff;border-right:1px solid #8a8a8a;border-bottom:1px solid #8a8a8a;"></div><div style="left:957px;top:95px;width:28px;height:21px;background:linear-gradient(180deg,#bbe48b,#9ad648);border-top:1px solid #7a7a7a;border-right:1px solid #7a7a7a;border-bottom:1px solid #7a7a7a;"></div><span class="t" style="left:955px;top:99.19px;font-size:11px;line-height:14px;color:#300;">ff</span><div style="left:957px;top:116px;width:27px;height:18px;background:#c3e68d;"></div><div style="left:957px;top:134px;width:27px;height:18px;background:#e2ecd6;"></div><div style="left:957px;top:152px;width:27px;height:18px;background:#e9f0e0;"></div><div style="left:957px;top:170px;width:27px;height:18px;background:#e2ecd6;"></div><div style="left:957px;top:188px;width:27px;height:18px;background:#e9f0e0;"></div><div style="left:957px;top:206px;width:27px;height:18px;background:#e2ecd6;"></div><div style="left:957px;top:224px;width:27px;height:18px;background:#e9f0e0;"></div><div style="left:957px;top:398px;width:27px;height:16px;background:#f0f0f0;"></div><svg style="left:968px;top:398px" width="16" height="16" viewBox="0 0 16 16"><path d="M6 4.5l3.5 3.5l-3.5 3.5" fill="none" stroke="#555" stroke-width="1.8"/></svg><div style="left:957px;top:431px;width:27px;height:22px;background:#e9e8e5;border:1px solid #adadad;border-left:none;box-shadow:inset -1px 0 0 #f6f6f4,inset 0 1px 0 #f6f6f4,inset 0 -1px 0 #f6f6f4;"></div><span class="t" style="left:953px;top:434.79px;font-size:11px;line-height:14px;color:#111;">eßen</span><svg style="left:989px;top:463px" width="10" height="10" viewBox="0 0 10 10" fill="#b5b5b5"><rect x="7" y="1" width="2" height="2"/><rect x="4" y="4" width="2" height="2"/><rect x="7" y="4" width="2" height="2"/><rect x="1" y="7" width="2" height="2"/><rect x="4" y="7" width="2" height="2"/><rect x="7" y="7" width="2" height="2"/></svg><div style="left:1px;top:31px;width:956px;height:960px;background:#676d6b;"></div><div style="left:1px;top:39px;width:948px;height:944px;background:#f3f2ee;"></div><div style="left:891px;top:39px;width:58px;height:33px;background:#676d6b;"></div><svg style="left:891px;top:39px" width="58" height="33" viewBox="0 0 58 33"><path d="M21.5 6.8l-5 5l5 5" fill="none" stroke="#fff" stroke-width="1.9"/><path d="M41.5 9.5l6 6M47.5 9.5l-6 6" fill="none" stroke="#fff" stroke-width="2.1"/></svg><div style="left:704px;top:31px;width:118px;height:16px;background:linear-gradient(180deg,#3b4140 0,#3b4140 8px,#8a8a8a 8px,#8a8a8a 100%);border:1px solid #9c9c9c;border-top:none;border-radius:0 0 4px 4px;"></div><svg style="left:704px;top:31px" width="118" height="16" viewBox="0 0 118 16"><g fill="#f2f2f2"><rect x="11" y="2" width="3" height="3"/><rect x="11" y="8" width="3" height="3"/><rect x="17" y="2" width="3" height="3"/><rect x="17" y="8" width="3" height="3"/><rect x="23" y="2" width="3" height="3"/><rect x="23" y="8" width="3" height="3"/><rect x="29" y="2" width="3" height="3"/><rect x="29" y="8" width="3" height="3"/><rect x="35" y="2" width="3" height="3"/><rect x="35" y="8" width="3" height="3"/><rect x="41" y="2" width="3" height="3"/><rect x="41" y="8" width="3" height="3"/><rect x="74" y="2" width="3" height="3"/><rect x="74" y="8" width="3" height="3"/><rect x="80" y="2" width="3" height="3"/><rect x="80" y="8" width="3" height="3"/><rect x="86" y="2" width="3" height="3"/><rect x="86" y="8" width="3" height="3"/><rect x="92" y="2" width="3" height="3"/><rect x="92" y="8" width="3" height="3"/><rect x="98" y="2" width="3" height="3"/><rect x="98" y="8" width="3" height="3"/><rect x="104" y="2" width="3" height="3"/><rect x="104" y="8" width="3" height="3"/></g><path d="M57 2h4v4h3l-5 5l-5-5h3z" fill="#b0b0b0"/></svg><div class="clip" style="left:2px;top:44px;width:34px;height:33px;"><div style="left:1.5px;top:0;width:28.5px;height:28px;background:linear-gradient(90deg,#dedede,#fbfbfb 35%,#fff 65%,#d4d4d4);border-radius:0 0 0 10px;box-shadow:1px 1px 2px rgba(0,0,0,.55);border-right:1px solid #a9a9a9;border-bottom:1px solid #a9a9a9;" class="clip"><svg style="left:0;top:0" width="28" height="28" viewBox="0 0 28 28"><circle cx="16" cy="4.500" r="8" fill="none" stroke="#707070" stroke-width="1"/><circle cx="16" cy="22.700" r="8" fill="none" stroke="#707070" stroke-width="1"/><path d="M11.900 3.900l4.200 3.800l6-8.300" fill="none" stroke="#2f7a10" stroke-width="3.300"/><path d="M11.900 3.900l4.200 3.800l6-8.300" fill="none" stroke="#5cc020" stroke-width="1.800"/><path d="M11.900 22.500l4.200 4l8.500-11" fill="none" stroke="#2f7a10" stroke-width="3.300"/><path d="M11.900 22.500l4.200 4l8.500-11" fill="none" stroke="#5cc020" stroke-width="1.800"/></svg></div></div><div style="left:36px;top:96px;width:2px;height:246px;background:#12979c;"></div><div style="left:6px;top:96px;width:30px;height:1px;background:linear-gradient(90deg,rgba(150,150,150,0),#b5b5b5);"></div><div style="left:6px;top:341px;width:30px;height:1px;background:linear-gradient(90deg,rgba(150,150,150,0),#b5b5b5);"></div><div style="left:35px;top:342px;width:2px;height:540px;background:linear-gradient(180deg,#787878 0,#8c8c8c 80%,rgba(140,140,140,0) 100%);"></div><svg style="left:15px;top:111px" width="11" height="11" viewBox="0 0 11 11"><path d="M2.300 2.300l6.400 6.400M8.700 2.300l-6.400 6.400" stroke="#505050" stroke-width="2.100" fill="none"/></svg><span class="t" style="left:6.7px;top:330px;font-size:19.3px;line-height:24px;color:#1d9ca1;transform-origin:0 0;transform:rotate(-90deg);letter-spacing:-0.676px;">99999 - 33/2025 - Januar</span><svg style="left:9px;top:899px" width="18" height="18" viewBox="0 0 18 18"><circle cx="7" cy="7" r="4.6" fill="#d8ecf7" stroke="#8a9aa6" stroke-width="1.3"/><path d="M10.5 10.5l5 5" stroke="#4a4a4a" stroke-width="2.2" stroke-linecap="round"/></svg><svg style="left:4px;top:926px" width="28" height="16" viewBox="0 0 28 16"><path d="M2 13.5l6.5-6.5a3.6 3.6 0 0 1 4.6-4.6l-2.5 2.5l1 2l2 1l2.5-2.500a3.6 3.6 0 0 1-4.600 4.600l-6.500 6.500z" fill="#8d949b" stroke="#5d646b" stroke-width=".7" transform="translate(-1,-2)"/><path d="M19.500 6.500h6l-3 3.200z" fill="#111"/></svg><svg style="left:4px;top:953px" width="28" height="16" viewBox="0 0 28 16"><defs><radialGradient id="hg" cx=".4" cy=".3" r=".8"><stop offset="0" stop-color="#cfe88a"/><stop offset=".6" stop-color="#7fb51f"/><stop offset="1" stop-color="#4d7d10"/></radialGradient></defs><circle cx="8" cy="8" r="6.800" fill="url(#hg)" stroke="#4d7d10" stroke-width=".6"/><text x="8" y="12" text-anchor="middle" font-family="Liberation Sans,sans-serif" font-weight="bold" font-size="11" fill="#fff">?</text><path d="M19.500 6.500h6l-3 3.200z" fill="#111"/></svg><span class="t" style="left:57px;top:44.98px;font-size:14.5px;line-height:18px;color:#777;letter-spacing:-0.190px;">99999 Mustermandant 33 Buchführung / 2025 1 Januar</span><span class="t" style="left:57.5px;top:75.70px;font-size:22.5px;line-height:28px;color:#12979c;letter-spacing:-0.951px;">FiBu Checkliste</span><div style="left:129px;top:121px;width:32px;height:23px;background:#c9c9c9;"></div><div style="left:126px;top:123px;width:1px;height:19px;background:#b4bcc8;"></div><div style="left:185px;top:123px;width:1px;height:19px;background:#b4bcc8;"></div><div style="left:234px;top:123px;width:1px;height:19px;background:#b4bcc8;"></div><div style="left:327px;top:123px;width:1px;height:19px;background:#b4bcc8;"></div><div style="left:390px;top:123px;width:1px;height:19px;background:#b4bcc8;"></div><svg style="left:58px;top:118px" width="360" height="30" viewBox="0 0 360 30"><defs><linearGradient id="sv" x1="0" y1="0" x2="0" y2="1"><stop offset="0" stop-color="#cdcdcd"/><stop offset="1" stop-color="#a6a6a6"/></linearGradient><linearGradient id="pr" x1="0" y1="0" x2="0" y2="1"><stop offset="0" stop-color="#9cc47a"/><stop offset="1" stop-color="#5f8a3c"/></linearGradient><linearGradient id="bd" x1="0" y1="0" x2="1" y2="0"><stop offset="0" stop-color="#2b3566"/><stop offset=".55" stop-color="#3c477c"/><stop offset="1" stop-color="#a7aec9"/></linearGradient></defs><path d="M5 8.300h12.200l1 1v11.600h-13.200z" fill="url(#sv)" stroke="#b5b5b5" stroke-width=".6"/><rect x="8" y="8.600" width="7.500" height="5.400" fill="#e9e9e9"/><rect x="12.800" y="9.600" width="1.600" height="3" fill="#a9a9a9"/><path d="M7.500 16.500h8.500M7.500 18.600h8.500" stroke="#d9d9d9" stroke-width="1.100"/><path d="M30.500 7.300h4.500l2.500 2.500v6h-7z" fill="#fff" stroke="#8c93b0" stroke-width=".9"/><path d="M35 7.300v2.500h2.500" fill="#dfe3f0" stroke="#8c93b0" stroke-width=".7"/><path d="M32 12.200h4" stroke="#3da82a" stroke-width="1.300"/><path d="M26.500 13.500h3.500v3h8v-3h1.500v7.300h-13z" fill="url(#pr)" stroke="#3f5a25" stroke-width=".9"/><path d="M29 18.600h8" stroke="#e4eedb" stroke-width="1.100"/><path d="M47.300 7.500h7l2.500 1v11.500l-2.500 .800h-7z" fill="url(#bd)"/><path d="M54.300 7.500l2.500 1v11.500l-2.500 .800z" fill="#8a92b5"/><rect x="48.300" y="8.300" width="3" height="1.200" fill="#9fd0ef"/><rect x="48.500" y="10.800" width="2.600" height="2" fill="#e8eaf3"/><rect x="48.500" y="13.600" width="2.600" height="2.600" fill="#f3f4f9"/><circle cx="49.800" cy="18.600" r="1.100" fill="none" stroke="#e8eaf3" stroke-width=".7"/><path d="M53.500 14.300h5.200v-2.300l4.400 3.500l-4.400 3.500v-2.300h-5.200z" fill="#3f9fd3" stroke="#0d5f8f" stroke-width=".8"/><path d="M80 8.200h2.800v3.800h3.800v2.800h-3.800v3.800h-2.800v-3.800h-3.800v-2.800h3.800z" fill="#a5d64a" stroke="#4e8a0e" stroke-width=".9"/><path d="M81.400 9.300v8.200M77.300 13.400h8.200" stroke="#c9ea86" stroke-width=".7"/><path d="M92.800 12h7.400l-3.700 4.200z" fill="#111"/><path d="M110 9.600l8 8M118 9.600l-8 8" stroke="#a3121c" stroke-width="2.900" stroke-linecap="round"/><path d="M110 9.600l8 8M118 9.600l-8 8" stroke="#e8404a" stroke-width="1.400" stroke-linecap="round"/><rect x="133.400" y="6.600" width="9.200" height="8.400" fill="#fff" stroke="#47525d" stroke-width="1"/><path d="M135 8.5h6" stroke="#2e8a1e" stroke-width="1.1"/><path d="M135 10.5h6" stroke="#2e8a1e" stroke-width="1.1"/><path d="M135 12.5h6" stroke="#2e8a1e" stroke-width="1.1"/><rect x="138.400" y="12.600" width="9.200" height="8" fill="#fff" stroke="#47525d" stroke-width="1"/><path d="M140 14.6h6" stroke="#2e8a1e" stroke-width="1.1"/><path d="M140 16.6h6" stroke="#2e8a1e" stroke-width="1.1"/><path d="M140 18.6h6" stroke="#2e8a1e" stroke-width="1.1"/><path d="M157.700 9h3.300v-1.200h1.200l.6-1h1.400l.6 1h1.200v1.200h3.300v11.500h-11.600z" fill="#d9d9d9" stroke="#c0c0c0" stroke-width=".8"/><rect x="162.500" y="12.500" width="7.300" height="6.300" fill="#ececec" stroke="#bdbdbd" stroke-width=".8"/><path d="M164 14.700h4.300M164 16.600h4.300" stroke="#bdbdbd" stroke-width=".9"/><path d="M184.2 10.5h8.800000000000011" stroke="#454545" stroke-width="1.1"/><path d="M184.2 12.4h8.800000000000011" stroke="#454545" stroke-width="1.1"/><path d="M184.2 14.3h8.800000000000011" stroke="#454545" stroke-width="1.1"/><path d="M190 16.5h7" stroke="#454545" stroke-width="1.1"/><path d="M190 18.5h7" stroke="#454545" stroke-width="1.1"/><path d="M189 18h-3.300v-2l-3.600 3l3.600 3v-2h3.300z" fill="#c2454b"/><path d="M205.8 10.5h9.199999999999989" stroke="#454545" stroke-width="1.1"/><path d="M205.8 12.4h9.199999999999989" stroke="#454545" stroke-width="1.1"/><path d="M205.8 14.3h9.199999999999989" stroke="#454545" stroke-width="1.1"/><path d="M212 16.5h7.300000000000011" stroke="#454545" stroke-width="1.1"/><path d="M212 18.5h7.300000000000011" stroke="#454545" stroke-width="1.1"/><path d="M204 18h3.300v-2l3.600 3l-3.600 3v-2h-3.300z" fill="#c2454b"/><path d="M234.3 10.5h6.899999999999977" stroke="#3f3f3f" stroke-width="1.1"/><path d="M234.3 12.5h6.899999999999977" stroke="#3f3f3f" stroke-width="1.1"/><path d="M234.3 14.5h6.899999999999977" stroke="#3f3f3f" stroke-width="1.1"/><path d="M234.3 16.5h6.899999999999977" stroke="#3f3f3f" stroke-width="1.1"/><path d="M234.3 18.5h6.899999999999977" stroke="#3f3f3f" stroke-width="1.1"/><path d="M230 10.800l3.200 3.600h-2v2.400h2.400v1.800h-4.400v-4.200h-2.300z" fill="#c2353b"/><path d="M256.2 10.5h6.800000000000011" stroke="#c9c9c9" stroke-width="1.1"/><path d="M256.2 12.5h6.800000000000011" stroke="#c9c9c9" stroke-width="1.1"/><path d="M256.2 14.5h6.800000000000011" stroke="#c9c9c9" stroke-width="1.1"/><path d="M256.2 16.5h6.800000000000011" stroke="#c9c9c9" stroke-width="1.1"/><path d="M256.2 18.5h6.800000000000011" stroke="#c9c9c9" stroke-width="1.1"/><path d="M252 18.300l-3.200-3.600h2v-2.400h2.400v2.400h2z" fill="#c4c4c4"/><circle cx="341.300" cy="11.700" r="4.700" fill="#d7ecf8" stroke="#8b9aa5" stroke-width="1.200"/><path d="M339 9.500a3 3 0 0 1 4-1" stroke="#fff" stroke-width="1" fill="none"/><path d="M344.800 15.300l4.300 4.300" stroke="#3f3f3f" stroke-width="2.300" stroke-linecap="round"/></svg><span class="t" style="left:333px;top:126.34px;font-size:12px;line-height:15px;color:#111;letter-spacing:-0.229px;">Anzeige</span><svg style="left:377px;top:129px" width="9" height="6" viewBox="0 0 9 6"><path d="M0.500 0.500h8l-4 4.500z" fill="#111"/></svg><div style="left:414px;top:121px;width:79px;height:22px;background:#fff;border-bottom:1px solid #9a9a9a;border-right:1px solid #c8c8c8;box-shadow:0 1px 1px rgba(0,0,0,.15);"></div><span class="t" style="left:419px;top:126.34px;font-size:12px;line-height:15px;color:#9a9a9a;letter-spacing:-0.070px;font-style:italic;">Suchbegriff</span><div style="left:493px;top:121px;width:14px;height:25px;background:linear-gradient(180deg,rgba(236,236,230,0) 0,#e4e4dc 35%,#8f9078 100%);border-radius:0 3px 3px 0;"></div><svg style="left:495px;top:138px" width="10" height="7" viewBox="0 0 10 7"><path d="M1 0.500h7" stroke="#fff" stroke-width="1"/><path d="M2 2.500h5l-2.500 3z" fill="#fff"/></svg><div class="clip" style="left:57px;top:147px;width:870px;height:826px;background:#fff;border:1px solid #c4c3c1;border-radius:7px;box-shadow:0 1px 2px rgba(0,0,0,.15);"><div style="left:0;top:0;width:597px;height:12px;background:linear-gradient(180deg,#454b4a,#666c6b);"></div><div style="left:597px;top:0;width:272px;height:824px;background:#e5e4e2;border-left:1px solid #9e9e9e;"></div><div style="left:580px;top:12px;width:18px;height:811px;background:#f3f2ee;"></div><div style="left:583px;top:32px;width:10px;height:417px;background:#c9c8c6;"></div><svg style="left:579px;top:12px" width="18" height="811" viewBox="0 0 18 811"><path d="M4.500 14h9l-4.500-5z" fill="#c9c8c6"/><path d="M4.500 800h9l-4.500 5z" fill="#c9c8c6"/></svg></div><div style="left:58px;top:179px;width:2px;height:1px;background:#7f7f7f;"></div><div style="left:58px;top:208px;width:2px;height:1px;background:#7f7f7f;"></div><span class="t" style="left:65px;top:172.50px;font-size:13px;line-height:16px;color:#1a1a1a;letter-spacing:0.353px;-webkit-text-stroke:0.1px #1a1a1a;">Hinweise zum Mandanten</span><div style="left:228px;top:179px;width:399px;height:1px;background:#7f7f7f;"></div><span class="t" style="left:65px;top:201.50px;font-size:13px;line-height:16px;color:#1a1a1a;letter-spacing:0.327px;-webkit-text-stroke:0.1px #1a1a1a;">Checklisteninformationen</span><div style="left:232px;top:208px;width:395px;height:1px;background:#7f7f7f;"></div><span class="t" style="left:119.5px;top:243.50px;font-size:13px;line-height:16px;color:#1a1a1a;letter-spacing:0.107px;-webkit-text-stroke:0.1px #1a1a1a;">1. Allgemein</span><div style="left:201px;top:250px;width:426px;height:1px;background:#7f7f7f;"></div><div style="left:99px;top:250px;width:16px;height:1px;background:#7f7f7f;"></div><span class="t" style="left:132.5px;top:267.34px;font-size:12px;line-height:15px;color:#646464;">1.</span><span class="t" style="left:149px;top:267.34px;font-size:12px;line-height:15px;color:#646464;letter-spacing:-0.205px;font-style:italic;">Sofern nicht ein Kleinstfall, werden alle EÜR’s bzw. § 4 (3) Rechner debitorisch und</span><span class="t" style="left:149px;top:282.34px;font-size:12px;line-height:15px;color:#646464;letter-spacing:-0.126px;font-style:italic;">kreditorisch gebucht</span><span class="t" style="left:132.5px;top:307.84px;font-size:12px;line-height:15px;color:#646464;">2.</span><span class="t" style="left:149px;top:307.84px;font-size:12px;line-height:15px;color:#646464;letter-spacing:-0.170px;font-style:italic;">Eine Übersicht mit allen DATEV-Buchungsschlüsseln liegt im Wiki FiBu Bereich</span><span class="t" style="left:132.5px;top:333.34px;font-size:12px;line-height:15px;color:#646464;">3.</span><span class="t" style="left:149px;top:333.34px;font-size:12px;line-height:15px;color:#646464;letter-spacing:-0.095px;font-style:italic;">Etwaige Korrekturbuchungen sind immer über Generalumkehr buchen</span><span class="t" style="left:132.5px;top:358.84px;font-size:12px;line-height:15px;color:#646464;">4.</span><span class="t" style="left:149px;top:358.84px;font-size:12px;line-height:15px;color:#646464;letter-spacing:-0.099px;font-style:italic;">Für erhaltene Anzahlungen ist grundsätzlich der DATEV Assistent zu verwenden</span><span class="t" style="left:119.5px;top:394.50px;font-size:13px;line-height:16px;color:#1a1a1a;letter-spacing:0.234px;-webkit-text-stroke:0.1px #1a1a1a;">2. Vorarbeiten</span><div style="left:213px;top:401px;width:414px;height:1px;background:#7f7f7f;"></div><svg style="left:98.5px;top:398.5px" width="14" height="10" viewBox="0 0 14 10"><path d="M2 2.2l5 5l5-5" fill="none" stroke="#505050" stroke-width="1.9"/></svg><div style="left:66px;top:423px;width:14px;height:14px;border:1px solid #7b7b7b;border-radius:50%;background:radial-gradient(circle at 50% 40%,#fff 55%,#ececec 100%);box-shadow:0.5px 1px 1px rgba(0,0,0,.18);"></div><span class="t" style="left:119.5px;top:422.84px;font-size:12px;line-height:15px;color:#111;letter-spacing:-0.071px;">2.1 Rückfragen Vormonat durch Mandanten geklärt?</span><svg style="left:404px;top:424px" width="14.5" height="13" viewBox="0 0 16 13" preserveAspectRatio="none"><path d="M0.5 0.5h14v8.5l-3 3h-11z" fill="#f6dc62" stroke="#b89a2a"/><path d="M11.5 12v-3h3" fill="#fff3b0" stroke="#b89a2a" stroke-width=".8"/><path d="M3 3.5h9M3 5.8h9M3 8.1h6" stroke="#5a4a10" stroke-width="1"/></svg><span class="t" style="left:119px;top:445.84px;font-size:12px;line-height:15px;color:#646464;letter-spacing:-0.066px;font-style:italic;">Wenn nein Erinnerung durch FiBu Mitarbeiter, nach drei Monaten Eskalation an den Partner.</span><div style="left:115px;top:462px;width:517px;height:26px;background:#cbcac8;"></div><div style="left:66px;top:468px;width:14px;height:14px;border:1px solid #7b7b7b;border-radius:50%;background:radial-gradient(circle at 50% 40%,#fff 55%,#ececec 100%);box-shadow:0.5px 1px 1px rgba(0,0,0,.18);"></div><span class="t" style="left:119.5px;top:467.84px;font-size:12px;line-height:15px;color:#8b2f8b;letter-spacing:-0.844px;">2.2</span><svg style="left:138px;top:467px" width="16" height="16" viewBox="0 0 16 16"><path d="M8 1l2.100 4.500l4.900.600l-3.600 3.300l1 4.800l-4.400-2.500l-4.400 2.500l1-4.800l-3.600-3.300l4.900-.600z" fill="#f7d83e" stroke="#b5901a" stroke-width=".9"/></svg><span class="t" style="left:159px;top:467.84px;font-size:12px;line-height:15px;color:#8b2f8b;letter-spacing:0.011px;">Neuer individueller Checklistenpunkt</span><svg style="left:363px;top:469px" width="14.5" height="13" viewBox="0 0 16 13" preserveAspectRatio="none"><path d="M0.5 0.5h14v8.5l-3 3h-11z" fill="#f6dc62" stroke="#b89a2a"/><path d="M11.5 12v-3h3" fill="#fff3b0" stroke="#b89a2a" stroke-width=".8"/><path d="M3 3.5h9M3 5.8h9M3 8.1h6" stroke="#5a4a10" stroke-width="1"/></svg><span class="t" style="left:119.5px;top:509.50px;font-size:13px;line-height:16px;color:#1a1a1a;letter-spacing:-0.069px;-webkit-text-stroke:0.1px #1a1a1a;">3. Kasse/Bank</span><div style="left:212px;top:516px;width:415px;height:1px;background:#7f7f7f;"></div><svg style="left:98.5px;top:513.5px" width="14" height="10" viewBox="0 0 14 10"><path d="M2 2.2l5 5l5-5" fill="none" stroke="#505050" stroke-width="1.9"/></svg><div style="left:66px;top:538px;width:14px;height:14px;border:1px solid #7b7b7b;border-radius:50%;background:radial-gradient(circle at 50% 40%,#fff 55%,#ececec 100%);box-shadow:0.5px 1px 1px rgba(0,0,0,.18);"></div><span class="t" style="left:119.5px;top:537.84px;font-size:12px;line-height:15px;color:#111;letter-spacing:-0.251px;">3.1 Endsalden Kasse, Bank und Paypal etc. abgestimmt?</span><span class="t" style="left:119.5px;top:578.50px;font-size:13px;line-height:16px;color:#1a1a1a;letter-spacing:0.294px;-webkit-text-stroke:0.1px #1a1a1a;">4. Weitere Buchungen</span><div style="left:263px;top:585px;width:364px;height:1px;background:#7f7f7f;"></div><svg style="left:98.5px;top:582.5px" width="14" height="10" viewBox="0 0 14 10"><path d="M2 2.2l5 5l5-5" fill="none" stroke="#505050" stroke-width="1.9"/></svg><div style="left:66px;top:607px;width:14px;height:14px;border:1px solid #7b7b7b;border-radius:50%;background:radial-gradient(circle at 50% 40%,#fff 55%,#ececec 100%);box-shadow:0.5px 1px 1px rgba(0,0,0,.18);"></div><span class="t" style="left:119.5px;top:606.84px;font-size:12px;line-height:15px;color:#111;letter-spacing:-0.265px;">4.1 EB-Werte vorgetragen?</span><div style="left:66px;top:634px;width:14px;height:14px;border:1px solid #7b7b7b;border-radius:50%;background:radial-gradient(circle at 50% 40%,#fff 55%,#ececec 100%);box-shadow:0.5px 1px 1px rgba(0,0,0,.18);"></div><span class="t" style="left:119.5px;top:633.84px;font-size:12px;line-height:15px;color:#111;letter-spacing:-0.078px;">4.2 Wiederkehr. und Dauer-Buchungen gebucht?</span><div style="left:66px;top:661px;width:14px;height:14px;border:1px solid #7b7b7b;border-radius:50%;background:radial-gradient(circle at 50% 40%,#fff 55%,#ececec 100%);box-shadow:0.5px 1px 1px rgba(0,0,0,.18);"></div><span class="t" style="left:119.5px;top:660.84px;font-size:12px;line-height:15px;color:#111;letter-spacing:-0.057px;">4.3 Alle Schnittstellenverbindungen eingespielt?</span><div style="left:66px;top:688px;width:14px;height:14px;border:1px solid #7b7b7b;border-radius:50%;background:radial-gradient(circle at 50% 40%,#fff 55%,#ececec 100%);box-shadow:0.5px 1px 1px rgba(0,0,0,.18);"></div><span class="t" style="left:119.5px;top:687.84px;font-size:12px;line-height:15px;color:#111;letter-spacing:-0.136px;">4.4 Individuelle Besonderheiten des Mandats beachtet?</span><div style="left:66px;top:715px;width:14px;height:14px;border:1px solid #7b7b7b;border-radius:50%;background:radial-gradient(circle at 50% 40%,#fff 55%,#ececec 100%);box-shadow:0.5px 1px 1px rgba(0,0,0,.18);"></div><span class="t" style="left:119.5px;top:714.84px;font-size:12px;line-height:15px;color:#111;letter-spacing:-0.165px;">4.5 Eigenverbrauch gebucht?</span><div style="left:66px;top:742px;width:14px;height:14px;border:1px solid #7b7b7b;border-radius:50%;background:radial-gradient(circle at 50% 40%,#fff 55%,#ececec 100%);box-shadow:0.5px 1px 1px rgba(0,0,0,.18);"></div><span class="t" style="left:119.5px;top:741.84px;font-size:12px;line-height:15px;color:#111;letter-spacing:-0.051px;">4.6 Bestandsveränderung/ halbfertige Arbeiten gebucht?</span><div style="left:66px;top:769px;width:14px;height:14px;border:1px solid #7b7b7b;border-radius:50%;background:radial-gradient(circle at 50% 40%,#fff 55%,#ececec 100%);box-shadow:0.5px 1px 1px rgba(0,0,0,.18);"></div><span class="t" style="left:119.5px;top:768.84px;font-size:12px;line-height:15px;color:#111;">4.7 Abstimmung geleistete und erhaltene Anzahlungen</span><div style="left:66px;top:796px;width:14px;height:14px;border:1px solid #7b7b7b;border-radius:50%;background:radial-gradient(circle at 50% 40%,#fff 55%,#ececec 100%);box-shadow:0.5px 1px 1px rgba(0,0,0,.18);"></div><span class="t" style="left:119.5px;top:795.84px;font-size:12px;line-height:15px;color:#111;letter-spacing:-0.329px;">4.8 Bei 4/3 Rechnern – 10 Tage Regel beachtet?</span><span class="t" style="left:119.5px;top:836.50px;font-size:13px;line-height:16px;color:#1a1a1a;letter-spacing:0.373px;-webkit-text-stroke:0.1px #1a1a1a;">5. Anlagevermögen</span><div style="left:247px;top:843px;width:380px;height:1px;background:#7f7f7f;"></div><svg style="left:98.5px;top:840.5px" width="14" height="10" viewBox="0 0 14 10"><path d="M2 2.2l5 5l5-5" fill="none" stroke="#505050" stroke-width="1.9"/></svg><div style="left:66px;top:865px;width:14px;height:14px;border:1px solid #7b7b7b;border-radius:50%;background:radial-gradient(circle at 50% 40%,#fff 55%,#ececec 100%);box-shadow:0.5px 1px 1px rgba(0,0,0,.18);"></div><span class="t" style="left:119.5px;top:864.84px;font-size:12px;line-height:15px;color:#111;letter-spacing:-0.161px;">5.1 ANLAG Soforterfassung gebucht?</span><div style="left:66px;top:892px;width:14px;height:14px;border:1px solid #7b7b7b;border-radius:50%;background:radial-gradient(circle at 50% 40%,#fff 55%,#ececec 100%);box-shadow:0.5px 1px 1px rgba(0,0,0,.18);"></div><span class="t" style="left:119.5px;top:891.84px;font-size:12px;line-height:15px;color:#111;letter-spacing:-0.078px;">5.2 AfA-Buchungen erzeugt?</span><span class="t" style="left:119.5px;top:932.50px;font-size:13px;line-height:16px;color:#1a1a1a;letter-spacing:0.400px;-webkit-text-stroke:0.1px #1a1a1a;">6. Abstimmung vor DFÜ</span><div style="left:275px;top:939px;width:352px;height:1px;background:#7f7f7f;"></div><svg style="left:98.5px;top:936.5px" width="14" height="10" viewBox="0 0 14 10"><path d="M2 2.2l5 5l5-5" fill="none" stroke="#505050" stroke-width="1.9"/></svg><div class="clip" style="left:58px;top:955px;width:580px;height:16px;"><div style="left:8px;top:6px;width:14px;height:14px;border:1px solid #7b7b7b;border-radius:50%;background:radial-gradient(circle at 50% 40%,#fff 55%,#ececec 100%);box-shadow:0.5px 1px 1px rgba(0,0,0,.18);"></div><span class="t" style="left:61.5px;top:5.84px;font-size:12px;line-height:15px;color:#111;letter-spacing:-0.068px;">6.1 Geldtransit kontrolliert?</span></div><svg style="left:923px;top:520px" width="20" height="70" viewBox="0 0 20 70"><path d="M2.500 0v5c0 5 14 7 14 14v32c0 7-14 9-14 14v5h-2.500v-70z" fill="#e5e4e2" stroke="#c6c5c3" stroke-width="1"/><path d="M0 0h2.500v70h-2.500z" fill="#e5e4e2"/><path d="M11.500 29l-6 6l6 6" fill="none" stroke="#5bb530" stroke-width="2.400"/></svg><div style="left:665px;top:159px;width:209px;height:21px;background:#fff;border-bottom:1px solid #8a8a8a;"></div><span class="t" style="left:668.3px;top:162.24px;font-size:12px;line-height:15px;color:#111;letter-spacing:0.011px;">Neuer individueller Checklistenpunkt</span><div style="left:879px;top:158px;width:37px;height:22px;background:#8b8a8a;"></div><span class="t" style="left:889.3px;top:162.54px;font-size:12px;line-height:15px;color:#fff;letter-spacing:-0.344px;">2.2</span><div style="left:665px;top:192px;width:13px;height:13px;background:#fff;border-bottom:1px solid #8a8a8a;"></div><svg style="left:665px;top:192px" width="13" height="13" viewBox="0 0 13 13"><path d="M2.200 6.300l2.800 3.500l5.500-7.500" fill="none" stroke="#5cb531" stroke-width="1.700"/></svg><span class="t" style="left:683px;top:191.84px;font-size:12px;line-height:15px;color:#111;letter-spacing:-0.147px;">In Checkliste abhakbar</span><div style="left:665px;top:224px;width:12px;height:1px;background:#8c8c8c;"></div><span class="t" style="left:681px;top:217.80px;font-size:13px;line-height:16px;color:#1a1a1a;letter-spacing:0.435px;-webkit-text-stroke:0.1px #1a1a1a;">Wiederholung</span><div style="left:770.5px;top:224px;width:145.5px;height:1px;background:#8c8c8c;"></div><span class="t" style="left:686.3px;top:247.94px;font-size:12px;line-height:15px;color:#111;letter-spacing:0.255px;">Monatlich</span><div style="left:665px;top:283px;width:12px;height:1px;background:#8c8c8c;"></div><span class="t" style="left:681px;top:276.80px;font-size:13px;line-height:16px;color:#1a1a1a;letter-spacing:0.519px;-webkit-text-stroke:0.1px #1a1a1a;">Notiz</span><div style="left:717.2px;top:283px;width:198.79999999999995px;height:1px;background:#8c8c8c;"></div><div style="left:682px;top:303px;width:224px;height:131px;background:#fff;border-bottom:1px solid #8a8a8a;"></div><span class="t" style="left:687px;top:306.24px;font-size:12px;line-height:15px;color:#a9a9a9;letter-spacing:-0.419px;">[08.01.2025 - 12:16:17  1099 Drabent,</span><span class="t" style="left:687px;top:321.24px;font-size:12px;line-height:15px;color:#a9a9a9;">Yvonne]</span><span class="t" style="left:687px;top:335.94px;font-size:12px;line-height:15px;color:#111;letter-spacing:-0.187px;">Hier lassen sich die Checklisten</span><span class="t" style="left:687px;top:350.74px;font-size:12px;line-height:15px;color:#111;letter-spacing:-0.032px;">individualisieren. Punkte werden in</span><span class="t" style="left:687px;top:365.54px;font-size:12px;line-height:15px;color:#111;">Folgechecklisten übernommen</span><div style="left:665px;top:453px;width:12px;height:1px;background:#8c8c8c;"></div><span class="t" style="left:681px;top:446.80px;font-size:13px;line-height:16px;color:#1a1a1a;letter-spacing:0.428px;-webkit-text-stroke:0.1px #1a1a1a;">Detailinformation</span><div style="left:789.9px;top:453px;width:126.10000000000002px;height:1px;background:#8c8c8c;"></div><div style="left:682px;top:473px;width:224px;height:131px;background:#fff;border-bottom:1px solid #8a8a8a;"></div><div style="left:665px;top:623px;width:12px;height:1px;background:#8c8c8c;"></div><span class="t" style="left:681px;top:616.80px;font-size:13px;line-height:16px;color:#1a1a1a;letter-spacing:0.375px;-webkit-text-stroke:0.1px #1a1a1a;">Ziel/Nutzen</span><div style="left:755.0px;top:623px;width:161.0px;height:1px;background:#8c8c8c;"></div><div style="left:682px;top:643px;width:224px;height:131px;background:#fff;border-bottom:1px solid #8a8a8a;"></div><div style="left:665px;top:793px;width:12px;height:1px;background:#8c8c8c;"></div><span class="t" style="left:681px;top:786.80px;font-size:13px;line-height:16px;color:#1a1a1a;letter-spacing:0.428px;-webkit-text-stroke:0.1px #1a1a1a;">Verknüpfungen</span><div style="left:778.1px;top:793px;width:137.89999999999998px;height:1px;background:#8c8c8c;"></div><div style="left:805px;top:813px;width:15px;height:25px;background:linear-gradient(180deg,rgba(228,228,220,.2) 0,#dcdcd2 40%,#8f9078 100%);border-radius:3px 3px 3px 0;"></div><svg style="left:808px;top:829px" width="10" height="7" viewBox="0 0 10 7"><path d="M2 0.500h6" stroke="#fff" stroke-width="1"/><path d="M2.500 2.500h5l-2.500 3z" fill="#fff"/></svg><div style="left:760px;top:816px;width:1px;height:18px;background:#b4bcc8;"></div><svg style="left:685px;top:815px" width="122" height="20" viewBox="0 0 122 20"><path d="M6.300 4h2.800v4.300h4.300v2.800h-4.300v4.300h-2.800v-4.300h-4.300v-2.800h4.300z" fill="#a5d64a" stroke="#4f8a10" stroke-width=".9"/><path d="M18.700 8h7.400l-3.700 4z" fill="#111"/><path d="M33 16.500l1-3.500l9.500-9.500l2.500 2.500l-9.500 9.500z" fill="#d3d3d3" stroke="#a5a5a5" stroke-width=".8"/><path d="M58 5l9 9M67 5l-9 9" stroke="#a9a9a9" stroke-width="2.300"/><g stroke="#b0b0b0" stroke-width="1.300"><path d="M88 6h9M88 8.700h9M88 11.400h9M88 14.100h9"/><path d="M110 6h9M110 8.700h9M110 11.400h9M110 14.100h9"/></g><path d="M84.500 6l-3 3.500h2v3h2v-3h2z" fill="#b0b0b0"/><path d="M106.500 13l-3-3.500h2v-3h2v3h2z" fill="#b0b0b0"/></svg><div style="left:682px;top:840px;width:224px;height:52px;background:#fff;border-bottom:1px solid #8a8a8a;"></div><div style="left:665px;top:910px;width:12px;height:1px;background:#8c8c8c;"></div><span class="t" style="left:681px;top:903.80px;font-size:13px;line-height:16px;color:#1a1a1a;letter-spacing:0.406px;-webkit-text-stroke:0.1px #1a1a1a;">Zuständigkeit</span><div style="left:767.7px;top:910px;width:148.29999999999995px;height:1px;background:#8c8c8c;"></div><div style="left:682px;top:930px;width:224px;height:21px;background:#fff;border-bottom:1px solid #8a8a8a;"></div><svg style="left:890px;top:937px" width="9" height="6" viewBox="0 0 9 6"><path d="M0.500 0.500h8l-4 4.500z" fill="#111"/></svg><div style="left:1px;top:991px;width:1542px;height:40px;background:#010308;"></div><div style="left:0px;top:1031px;width:1544px;height:1px;background:#6b6b6b;"></div><div style="left:1538px;top:993px;width:1px;height:38px;background:#5a5a5a;"></div><div style="left:152px;top:1029px;width:40px;height:2px;background:#76b9ed;"></div><div style="left:299px;top:1029px;width:31px;height:2px;background:#76b9ed;"></div><div style="left:348px;top:1029px;width:31px;height:2px;background:#76b9ed;"></div><div style="left:397px;top:1029px;width:40px;height:2px;background:#76b9ed;"></div><div style="left:446px;top:1029px;width:40px;height:2px;background:#76b9ed;"></div><div style="left:331px;top:1029px;width:8px;height:2px;background:#5d8fb8;"></div><div style="left:380px;top:1029px;width:8px;height:2px;background:#5d8fb8;"></div><svg style="left:16px;top:1002px" width="18" height="18" viewBox="0 0 18 18" fill="#fff"><path d="M0.500 2.800l7-1v6.700h-7zM8.300 1.700l8.700-1.300v8.100h-8.700zM0.500 9.300h7v6.700l-7-1zM8.300 9.300h8.700v8.100l-8.700-1.300z"/></svg><svg style="left:63px;top:1001px" width="20" height="20" viewBox="0 0 20 20"><circle cx="12" cy="8" r="5.300" fill="none" stroke="#fff" stroke-width="1.300"/><path d="M8.200 11.800l-6 6.200" stroke="#fff" stroke-width="1.300"/></svg><svg style="left:112px;top:1002px" width="18" height="18" viewBox="0 0 18 18" fill="none" stroke="#fff" stroke-width="1.200"><rect x="2.600" y="4.600" width="9" height="8"/><path d="M1 1.600h12M1 15.600h12M15.500 1v3M15.500 8v8"/><rect x="14.600" y="4.600" width="2" height="2.500" fill="#fff" stroke="none"/></svg><svg style="left:159px;top:998px" width="26" height="26" viewBox="0 0 26 26"><defs><linearGradient id="eg1" x1="0" y1="0" x2="1" y2="1"><stop offset="0" stop-color="#35c1f1"/><stop offset=".5" stop-color="#1b9de2"/><stop offset="1" stop-color="#0c59a4"/></linearGradient><linearGradient id="eg2" x1="0" y1="1" x2="1" y2="0"><stop offset="0" stop-color="#37bdff"/><stop offset=".5" stop-color="#54d38a"/><stop offset="1" stop-color="#8bdf3a"/></linearGradient></defs><circle cx="13" cy="12.500" r="11.500" fill="url(#eg1)"/><path d="M2 10c1-6 6-9 11-9c7 0 11.500 5 11.500 10c0 3-2 5.500-5.500 5.500c-3 0-4-1.500-4-2.500c0-1.200 1.200-1.500 1.200-3.200c0-2-2-4-5.200-4c-4 0-7.500 2.200-9 3.200z" fill="url(#eg2)"/><path d="M10.500 11.500c0 5 4 8.500 8.500 8.500c2 0 3.500-.600 4.500-1.200c-2 3.200-5 5-9 5c-6 0-9-5-9-9c0-2 1-3.500 2.500-4.500c1 0 2.500.200 2.500 1.200z" fill="#0b4f97" opacity=".85"/><circle cx="12.500" cy="12" r="2" fill="#0a0a0a"/><rect x="1" y="16" width="11" height="8" rx="1" fill="#e58a1a"/><rect x="1" y="16" width="11" height="3.500" rx="1" fill="#f0a030"/><path d="M4.500 16v-1.500h4v1.500" fill="none" stroke="#c36f10" stroke-width="1"/><rect x="5.800" y="19" width="1.400" height="1.800" fill="#ffe27a"/></svg><svg style="left:210px;top:1001px" width="22" height="20" viewBox="0 0 22 20"><path d="M0.500 2.500c0-1 .5-1.500 1.500-1.500h6l1.500 2h-9z" fill="#e8a317"/><rect x="0.500" y="2.800" width="21" height="15.500" rx="1" fill="#ffd96a"/><rect x="0.500" y="9" width="21" height="9.300" fill="#f7c948"/><path d="M4.500 18.300v-7h13v7h-3.500v-3.600h-6v3.600z" fill="#3d8fdc"/><path d="M4.500 11.300h13v2h-13z" fill="#62abf0"/></svg><svg style="left:257px;top:999px" width="26" height="24" viewBox="0 0 26 24"><ellipse cx="12" cy="11" rx="11" ry="7" transform="rotate(-22 12 11)" fill="#9a9a9a"/><ellipse cx="12.500" cy="9.500" rx="10.500" ry="6.300" transform="rotate(-22 12.500 9.500)" fill="#f4f4f4" stroke="#e02020" stroke-width="1.700"/><path d="M9 5l8 11M16 4l-3 12" stroke="#8a8a8a" stroke-width="1.100"/><ellipse cx="16" cy="19.500" rx="1.700" ry="3" transform="rotate(25 16 19.500)" fill="none" stroke="#1f9ad6" stroke-width="1.600"/><ellipse cx="21" cy="15.800" rx="1.700" ry="3" transform="rotate(-60 21 15.800)" fill="none" stroke="#1f9ad6" stroke-width="1.600"/></svg><svg style="left:307px;top:998px" width="23" height="23" viewBox="0 0 23 23"><rect x="1" y="0.500" width="21.500" height="21.500" fill="#f4f4f4"/><path d="M12.500 1.500c-1.800-.5-3 1.200-1.200 2c-5 1.500-9 5.500-9 10c0 5 4.500 8.500 10 8.500h2v1l7.500-5l-7.500-5.500v2.500h-1.500c-3 0-5.500-1.800-5.500-5c0-3 2-5.500 4.500-6.500c1.500-.6 1.700-1.600.7-2z" fill="#7ac52a"/><path d="M11.300 3.500c-4.500 1.800-7.500 5.500-7.500 9.800c0 4.200 3.500 7.200 8.500 7.200h3" fill="none" stroke="#4a9c10" stroke-width="1.100"/><path d="M11.800 2.600c1.300.2 1.500 1 .5 1.500c-2.500 1.200-4.300 3.500-4.300 6.300" fill="none" stroke="#d6f2a2" stroke-width=".9"/></svg><svg style="left:355px;top:999px" width="26" height="23" viewBox="0 0 26 23"><rect x="8" y="1" width="17" height="12" fill="#1490df"/><rect x="8" y="1" width="8.500" height="5.500" fill="#0f6cbd"/><rect x="16.500" y="1" width="8.500" height="5.500" fill="#28a8ea"/><rect x="16.500" y="6.500" width="8.500" height="5" fill="#50d9ff"/><rect x="8" y="6.500" width="8.500" height="5" fill="#1e8fe0"/><path d="M7 11.500h18v11h-18z" fill="#1a9be6"/><path d="M7 11.500l9 6l9-6v1.500l-9 6l-9-6z" fill="#0f7ad6"/><path d="M7 22.500l18-10.500v10.500z" fill="#0a63b0" opacity=".55"/><rect x="0.500" y="5.500" width="12.500" height="12.500" rx="1" fill="#0f6cbd"/><ellipse cx="6.800" cy="11.800" rx="3.100" ry="3.600" fill="none" stroke="#fff" stroke-width="1.900"/></svg><svg style="left:405px;top:999px" width="24" height="24" viewBox="0 0 24 24"><defs><radialGradient id="kg" cx=".5" cy=".3" r=".8"><stop offset="0" stop-color="#e8eeff"/><stop offset=".55" stop-color="#8fa4e8"/><stop offset="1" stop-color="#3450b8"/></radialGradient></defs><circle cx="12" cy="12" r="11" fill="url(#kg)" stroke="#e8e8f0" stroke-width="1.300"/><path d="M8.500 10v-2.500c0-2.200 1.500-3.500 3.500-3.500s3.500 1.300 3.500 3.500v2.500" fill="none" stroke="#9aa8e0" stroke-width="2.200"/><rect x="6" y="10" width="12" height="8.500" rx=".8" fill="#0c1440"/><path d="M6 12.700h12M6 15.500h12" stroke="#5a6cc0" stroke-width=".8"/><rect x="11" y="12" width="2" height="3.300" fill="#c8d0f0"/></svg><svg style="left:454px;top:998px" width="23" height="23" viewBox="0 0 23 23"><path d="M0.500 0.500h21.500v21.500h-14c-4 0-7.500-3-7.500-7.500z" fill="#f4f4f4"/><path d="M0.500 6.500l1-4h16.500l2 4v2.500h-19.500z" fill="#e0606a"/><path d="M0.500 7.500h19.500v1.800h-19.500z" fill="#c84450"/><g fill="#4a9a1a"><rect x="1.200" y="11.500" width="2.800" height="4"/><rect x="5.500" y="11.500" width="3" height="4"/><rect x="10" y="11.500" width="3" height="4"/><rect x="5.500" y="17" width="3" height="4.500"/><rect x="10" y="17" width="3" height="4.500"/><rect x="2.500" y="17" width="1.800" height="3"/></g></svg><svg style="left:1333px;top:1007px" width="14" height="8" viewBox="0 0 14 8"><path d="M1 7l6-5.800l6 5.800" fill="none" stroke="#fff" stroke-width="1.300"/></svg><svg style="left:1357px;top:1002px" width="14" height="17" viewBox="0 0 14 17"><rect x="1" y="2" width="12" height="5" fill="#c9ccd6"/><rect x="9.500" y="0.500" width="1.200" height="2" fill="#aaa"/><rect x="1.500" y="6" width="11" height="10.500" fill="#3da81a"/><rect x="1.500" y="6" width="11" height="3" fill="#6fd040"/><rect x="1.500" y="13.500" width="11" height="3" fill="#2a8a10"/></svg><svg style="left:1379px;top:1004px" width="18" height="15" viewBox="0 0 18 15" fill="none" stroke="#fff" stroke-width="1.100"><rect x="4.600" y="1.600" width="12" height="8.500"/><path d="M10.500 10v3M6.500 13.400h8"/><rect x="1.500" y="1.500" width="3.500" height="3.200" fill="#010308"/><path d="M3.200 4.700v8.700h2.500"/></svg><svg style="left:1403px;top:1003px" width="18" height="16" viewBox="0 0 18 16" fill="none" stroke="#fff" stroke-width="1.100"><path d="M1.600 5.500h2.500l3.500-3.500v12l-3.500-3.500h-2.500z"/><path d="M9.800 5.700c1 1.300 1 3.300 0 4.600M12 3.800c2 2.500 2 6 0 8.500M14.300 2c2.800 3.500 2.800 8.500 0 12"/></svg><span class="t" style="left:1443.5px;top:994.94px;font-size:12px;line-height:15px;color:#fff;letter-spacing:-1.008px;">12:32</span><span class="t" style="left:1430px;top:1013.34px;font-size:12px;line-height:15px;color:#fff;letter-spacing:-0.674px;">08.01.2025</span><svg style="left:1500px;top:1001px" width="30" height="29" viewBox="0 0 30 29"><path d="M2 2.500h16v12.500h-12l-4 0z" fill="#fff"/><path d="M5 5.600h10M5 8.200h10M5 10.800h10" stroke="#010308" stroke-width="1.100"/><circle cx="17.700" cy="17.500" r="9.800" fill="#1a1a1a" stroke="#7d7d7d" stroke-width="1"/><text x="17.700" y="21.700" text-anchor="middle" font-family="Liberation Sans,sans-serif" font-weight="bold" font-size="11.500" fill="#fff" letter-spacing="-0.500">22</text></svg><div style="left:0px;top:1032px;width:1720px;height:48px;background:linear-gradient(90deg,#3d4eb4 0,#3245af 7%,#1b2fa7 18%,#142ea9 45%,#1a31a9 70%,#3146af 78%,#3b4db2 100%);"></div><div style="left:6px;top:1072px;width:6px;height:3px;background:#8d99d6;border-radius:1.500px;"></div><div style="left:50px;top:1072px;width:6px;height:3px;background:#8d99d6;border-radius:1.500px;"></div><div style="left:94px;top:1072px;width:6px;height:3px;background:#8d99d6;border-radius:1.500px;"></div><svg style="left:0px;top:1038px" width="28" height="32" viewBox="0 0 28 32"><circle cx="11" cy="11.500" r="4" fill="#7b83eb"/><circle cx="17.500" cy="15" r="2.500" fill="#5059c9"/><path d="M5 17h12v7.500c0 3.500-2.500 6-6 6s-6-2.500-6-6z" fill="#7b83eb"/><path d="M14 18.500h7v6c0 2-1.500 3.500-3.500 3.500s-3.500-1.500-3.500-3.500z" fill="#5059c9"/><rect x="0" y="13.500" width="7" height="11" rx="1" fill="#4b53bc"/><path d="M0.500 16.500h5M3 16.500v5.500" stroke="#fff" stroke-width="1.400"/><circle cx="18.200" cy="8.800" r="7.800" fill="#13a10e"/><path d="M14.800 9l2.500 2.500l4.500-4.800" fill="none" stroke="#fff" stroke-width="1.800"/></svg><svg style="left:41px;top:1046px" width="24" height="20" viewBox="0 0 24 20"><defs><linearGradient id="mg" x1="0" y1="0" x2="1" y2="1"><stop offset="0" stop-color="#5cc0f0"/><stop offset="1" stop-color="#2a86c8"/></linearGradient></defs><rect x="1" y="1" width="22" height="14" fill="url(#mg)" stroke="#6f7f8f" stroke-width="1"/><path d="M11 15.500h2.500v2h-2.500z" fill="#2b2b2b"/><path d="M7.500 17.600h9.500v1h-9.500z" fill="#2b2b2b"/></svg><svg style="left:85px;top:1044px" width="24" height="24" viewBox="0 0 24 24"><rect x="0" y="0" width="24" height="24" rx="3" fill="#0c0e6c"/><circle cx="12" cy="12" r="9.800" fill="#fff"/><path d="M4.500 12l4.500-3v2h6v-2l4.500 3l-4.500 3v-2h-6v2z" fill="#0c0e6c"/></svg><svg style="left:1397px;top:1052px" width="12" height="8" viewBox="0 0 12 8"><path d="M1 7l5-5.300l5 5.300" fill="none" stroke="#fff" stroke-width="1.500"/></svg><svg style="left:1427px;top:1048px" width="17" height="17" viewBox="0 0 17 17"><path d="M7 1.500c2 1 4 1.300 6 1.300v5c0 3.500-2.500 6-6 7.200c-3.500-1.200-6-3.700-6-7.200v-5c2 0 4-.3 6-1.300z" fill="#fff" stroke="#2a8be0" stroke-width="1.400"/><path d="M7 3v10.500c2.500-1 4.500-3 4.500-5.800v-3.600c-1.500 0-3-.4-4.500-1.100z" fill="#2a8be0"/><path d="M4 8l2.300 2.300l4.200-4.800" fill="none" stroke="#e8f4ff" stroke-width="1.300"/><rect x="9" y="10" width="6.500" height="5.500" rx="1" fill="#f0923a"/><path d="M10.500 10v-1.200c0-1 .7-1.600 1.700-1.600s1.700.6 1.700 1.600v1.200" fill="none" stroke="#f5b37a" stroke-width="1"/></svg><svg style="left:1458px;top:1049px" width="18" height="15" viewBox="0 0 18 15"><path d="M4.500 12.500c-2 0-3.500-1.300-3.500-3.200c0-1.700 1.300-3 3-3.100c.6-2 2.300-3.400 4.500-3.400c2.500 0 4.400 1.700 4.700 4c1.800.1 3.100 1.300 3.100 2.900c0 1.600-1.300 2.800-3 2.800z" fill="#dcdcdc" stroke="#0a0a0a" stroke-width="1.300"/><path d="M4 8c2-1.500 6-1.500 9 1" fill="none" stroke="#8a8a8a" stroke-width="1"/><path d="M3.500 1.500l11.500 12.500" stroke="#0a0a0a" stroke-width="1.400"/></svg><svg style="left:1490px;top:1047px" width="19" height="18" viewBox="0 0 19 18"><circle cx="9.500" cy="4" r="2.800" fill="#6b74d8"/><circle cx="14.500" cy="5.500" r="1.800" fill="#5560c8"/><path d="M6 7.500h8v5c0 2.300-1.700 4-4 4s-4-1.700-4-4z" fill="#6b74d8"/><path d="M12.500 8.500h5v4c0 1.400-1 2.500-2.500 2.500s-2.500-1.100-2.500-2.500z" fill="#5560c8"/><rect x="1" y="5.500" width="7.500" height="7.500" rx="1" fill="#4650b8"/><path d="M2.800 7.700h4M4.800 7.700v4" stroke="#fff" stroke-width="1.200"/><circle cx="14.300" cy="13.800" r="3.300" fill="#6bb83a" stroke="#cfe8b8" stroke-width=".6"/><path d="M12.800 13.900l1.100 1.100l1.900-2.100" fill="none" stroke="#fff" stroke-width=".9"/></svg><svg style="left:1524px;top:1049px" width="14" height="14" viewBox="0 0 14 14"><circle cx="7" cy="7" r="6.800" fill="#2783e2"/><path d="M10.500 3.200a5 5 0 1 0 1.300 5.300" fill="none" stroke="#e8f3ff" stroke-width="1.300"/><path d="M9.300 5.300a2.800 2.800 0 1 0 .5 2.700" fill="none" stroke="#e8f3ff" stroke-width="1.100"/><circle cx="7" cy="7.200" r=".9" fill="#e8f3ff"/></svg><svg style="left:1555px;top:1048px" width="17" height="17" viewBox="0 0 17 17"><rect x="0" y="0" width="16" height="16" rx="1.500" fill="#0c0e6c"/><circle cx="8" cy="8" r="6.600" fill="#fff"/><path d="M3 8l3-2v1.300h4v-1.300l3 2l-3 2v-1.300h-4v1.300z" fill="#0c0e6c"/><rect x="7" y="11.500" width="9" height="4.500" fill="#8ad81a"/></svg><svg style="left:1586px;top:1049px" width="18" height="13" viewBox="0 0 18 13" fill="none" stroke="#fff" stroke-width="1.400"><path d="M1 4.500c4.500-4.500 11.500-4.500 16 0"/><path d="M3.500 7.200c3-3 8-3 11 0"/><path d="M6 9.700c1.700-1.600 4.300-1.600 6 0"/><circle cx="9" cy="11.500" r="1" fill="#fff" stroke="none"/></svg><svg style="left:1610px;top:1048px" width="18" height="16" viewBox="0 0 18 16" fill="none" stroke="#fff" stroke-width="1.200"><path d="M1.600 5.500h2.500l3.500-3.500v12l-3.500-3.500h-2.500z"/><path d="M9.800 5.700c1 1.300 1 3.300 0 4.600M12 3.800c2 2.500 2 6 0 8.500"/><path d="M14.300 2c2.800 3.500 2.800 8.500 0 12" stroke="#8f9bd8"/></svg><span class="t" style="left:1672.5px;top:1040.27px;font-size:12.5px;line-height:16px;color:#fff;letter-spacing:-0.695px;">12:32</span><span class="t" style="left:1643px;top:1056.07px;font-size:12.5px;line-height:16px;color:#fff;letter-spacing:-0.507px;">08.01.2025</span></body></html>
